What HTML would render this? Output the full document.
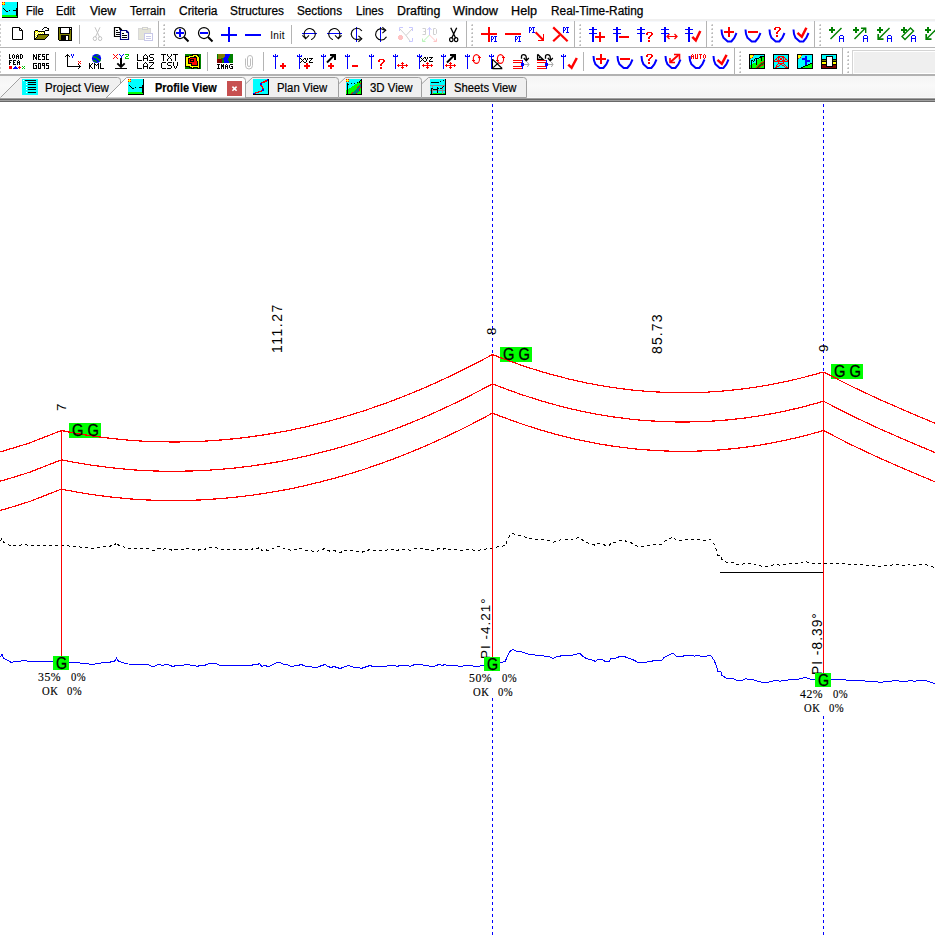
<!DOCTYPE html>
<html lang="en"><head><meta charset="utf-8"><title>PLS-CADD - Profile View</title>
<style>
html,body{margin:0;padding:0;background:#fff;}
body{width:935px;height:935px;overflow:hidden;position:relative;font-family:"Liberation Sans",sans-serif;font-size:12px;color:#000;}
.abs{position:absolute;}
.menubar{left:0;top:0;width:935px;height:19px;background:#fff;}
.menubar .mi{-webkit-text-stroke:0.25px #000;position:absolute;top:3px;height:16px;line-height:16px;white-space:nowrap;transform-origin:0 50%;}
.mshadow{left:0;top:19px;width:935px;height:2px;background:#f0f0f0;}
.mshadow2{left:0;top:21px;width:935px;height:1px;background:#f6f8fc;}
.tbrow1{left:0;top:22px;width:935px;height:25px;background:#fff;}
.tbline1{left:0;top:47px;width:935px;height:1px;background:#b4b4b4;}
.tbrow2{left:0;top:48px;width:935px;height:26px;background:#fff;}
.tbline2{left:0;top:74px;width:935px;height:2px;background:#b2b2b2;}
.tabrow{left:0;top:76px;width:935px;height:22px;background:linear-gradient(#f4f4f4,#f9f9f9 45%,#f3f3f3);}
.band{left:0;width:935px;height:1px;}
svg{position:absolute;left:0;top:0;overflow:visible;}
.px{shape-rendering:crispEdges;}
.tablabel{-webkit-text-stroke:0.2px #000;position:absolute;top:80px;height:16px;line-height:16px;white-space:nowrap;transform-origin:0 50%;}
.init{position:absolute;left:270.2px;top:30.2px;font-size:10px;line-height:12px;letter-spacing:0.35px;color:#000;}
.view{left:0;top:102px;width:935px;height:833px;background:#fff;}
.vt{position:absolute;white-space:nowrap;font-size:13.3px;line-height:1;letter-spacing:1px;transform-origin:0 0;transform:rotate(-90deg);}
.gl{-webkit-text-stroke:0.3px #000;position:absolute;font-size:16.5px;line-height:15px;height:15px;white-space:nowrap;}
.pct{-webkit-text-stroke:0.15px #000;position:absolute;font-family:"Liberation Serif",serif;font-size:12.5px;line-height:13px;white-space:pre;letter-spacing:0.6px;color:#000;}
</style></head><body>

<div class="abs menubar">
<span class="mi" style="left:25.6px;transform:scaleX(0.9099)">File</span>
<span class="mi" style="left:56.4px;transform:scaleX(0.9233)">Edit</span>
<span class="mi" style="left:90.2px;transform:scaleX(1.0079)">View</span>
<span class="mi" style="left:129.7px;transform:scaleX(0.9676)">Terrain</span>
<span class="mi" style="left:178.7px;transform:scaleX(0.9956)">Criteria</span>
<span class="mi" style="left:230.2px;transform:scaleX(0.9874)">Structures</span>
<span class="mi" style="left:297.2px;transform:scaleX(0.9776)">Sections</span>
<span class="mi" style="left:355.7px;transform:scaleX(0.9586)">Lines</span>
<span class="mi" style="left:396.8px;transform:scaleX(1.0326)">Drafting</span>
<span class="mi" style="left:453.2px;transform:scaleX(1.0542)">Window</span>
<span class="mi" style="left:511.2px;transform:scaleX(1.0532)">Help</span>
<span class="mi" style="left:550.9px;transform:scaleX(0.9862)">Real-Time-Rating</span>
</div>
<div class="abs mshadow"></div><div class="abs mshadow2"></div>
<div class="abs tbrow1"></div><div class="abs tbline1"></div>
<div class="abs tbrow2"></div><div class="abs tbline2"></div>
<div class="abs tabrow"></div>
<div class="abs band" style="top:97px;background:#f8f8f8"></div>
<div class="abs band" style="top:98px;background:#a0a0a0"></div>
<div class="abs band" style="top:99px;background:#696969"></div>
<div class="abs band" style="top:100px;background:#a0a0a0"></div>
<div class="abs band" style="top:101px;background:#696969"></div>
<div class="abs view"></div>
<svg class="px" width="935" height="22" viewBox="0 0 935 22"><rect x="2" y="2" width="1" height="1" fill="#ff0000"/><rect x="3" y="2" width="1" height="1" fill="#ffff00"/><rect x="4" y="2" width="1" height="1" fill="#ff0000"/><rect x="5" y="2" width="12" height="1" fill="#00ffff"/><rect x="17" y="2" width="1" height="1" fill="#000"/><rect x="2" y="3" width="3" height="1" fill="#ffff00"/><rect x="5" y="3" width="12" height="1" fill="#00ffff"/><rect x="17" y="3" width="1" height="1" fill="#000"/><rect x="2" y="4" width="1" height="1" fill="#ff0000"/><rect x="3" y="4" width="1" height="1" fill="#ffff00"/><rect x="4" y="4" width="1" height="1" fill="#ff0000"/><rect x="5" y="4" width="12" height="1" fill="#00ffff"/><rect x="17" y="4" width="1" height="1" fill="#000"/><rect x="2" y="5" width="15" height="1" fill="#00ffff"/><rect x="17" y="5" width="1" height="1" fill="#000"/><rect x="2" y="6" width="15" height="1" fill="#00ffff"/><rect x="17" y="6" width="1" height="1" fill="#000"/><rect x="2" y="7" width="15" height="1" fill="#00ffff"/><rect x="17" y="7" width="1" height="1" fill="#000"/><rect x="2" y="8" width="1" height="1" fill="#00ffff"/><rect x="3" y="8" width="1" height="1" fill="#000"/><rect x="4" y="8" width="12" height="1" fill="#00ffff"/><rect x="16" y="8" width="2" height="1" fill="#000"/><rect x="2" y="9" width="2" height="1" fill="#00ffff"/><rect x="4" y="9" width="1" height="1" fill="#000"/><rect x="5" y="9" width="11" height="1" fill="#00ffff"/><rect x="16" y="9" width="2" height="1" fill="#000"/><rect x="2" y="10" width="3" height="1" fill="#00ffff"/><rect x="5" y="10" width="1" height="1" fill="#000"/><rect x="6" y="10" width="3" height="1" fill="#00ffff"/><rect x="9" y="10" width="1" height="1" fill="#000"/><rect x="10" y="10" width="3" height="1" fill="#00ffff"/><rect x="13" y="10" width="5" height="1" fill="#000"/><rect x="2" y="11" width="4" height="1" fill="#00ffff"/><rect x="6" y="11" width="2" height="1" fill="#000"/><rect x="8" y="11" width="8" height="1" fill="#00ffff"/><rect x="16" y="11" width="2" height="1" fill="#000"/><rect x="2" y="12" width="14" height="1" fill="#00ffff"/><rect x="16" y="12" width="2" height="1" fill="#000"/><rect x="2" y="13" width="14" height="1" fill="#00ffff"/><rect x="16" y="13" width="2" height="1" fill="#000"/><rect x="2" y="14" width="14" height="1" fill="#00ffff"/><rect x="16" y="14" width="2" height="1" fill="#000"/><rect x="2" y="15" width="14" height="1" fill="#00ff00"/><rect x="16" y="15" width="2" height="1" fill="#000"/><rect x="2" y="16" width="15" height="1" fill="#00ff00"/><rect x="17" y="16" width="1" height="1" fill="#000"/><rect x="2" y="17" width="16" height="1" fill="#000"/></svg>
<svg class="px" width="935" height="48" viewBox="0 0 935 48"><g><rect x="0" y="24" width="1" height="2" fill="#cacaca"/><rect x="0" y="28" width="1" height="2" fill="#cacaca"/><rect x="0" y="32" width="1" height="2" fill="#cacaca"/><rect x="0" y="36" width="1" height="2" fill="#cacaca"/><rect x="0" y="40" width="1" height="2" fill="#cacaca"/><rect x="0" y="44" width="1" height="2" fill="#cacaca"/><path d="M12.5 27.5H19.5L22.5 30.5V39.5H12.5Z" stroke="#000" stroke-width="1" fill="#fff" shape-rendering="geometricPrecision"/><path d="M19.5 27.5V30.5H22.5" stroke="#000" stroke-width="1" fill="none" shape-rendering="geometricPrecision"/><rect x="44" y="27" width="3" height="1" fill="#000"/><rect x="43" y="28" width="1" height="1" fill="#000"/><rect x="47" y="28" width="2" height="1" fill="#000"/><rect x="42" y="29" width="1" height="1" fill="#000"/><rect x="48" y="29" width="1" height="1" fill="#000"/><rect x="35" y="30" width="3" height="1" fill="#000"/><rect x="45" y="30" width="4" height="1" fill="#000"/><rect x="34" y="31" width="1" height="1" fill="#000"/><rect x="35" y="31" width="3" height="1" fill="#ffff00"/><rect x="38" y="31" width="7" height="1" fill="#000"/><rect x="34" y="32" width="1" height="1" fill="#000"/><rect x="35" y="32" width="1" height="1" fill="#ffff00"/><rect x="36" y="32" width="1" height="1" fill="#ffffff"/><rect x="37" y="32" width="1" height="1" fill="#ffff00"/><rect x="38" y="32" width="1" height="1" fill="#ffffff"/><rect x="39" y="32" width="1" height="1" fill="#ffff00"/><rect x="40" y="32" width="1" height="1" fill="#ffffff"/><rect x="41" y="32" width="1" height="1" fill="#ffff00"/><rect x="42" y="32" width="1" height="1" fill="#ffffff"/><rect x="43" y="32" width="1" height="1" fill="#ffff00"/><rect x="44" y="32" width="1" height="1" fill="#000"/><rect x="34" y="33" width="1" height="1" fill="#000"/><rect x="35" y="33" width="1" height="1" fill="#ffffff"/><rect x="36" y="33" width="1" height="1" fill="#ffff00"/><rect x="37" y="33" width="1" height="1" fill="#ffffff"/><rect x="38" y="33" width="1" height="1" fill="#ffff00"/><rect x="39" y="33" width="1" height="1" fill="#ffffff"/><rect x="40" y="33" width="1" height="1" fill="#ffff00"/><rect x="41" y="33" width="1" height="1" fill="#ffffff"/><rect x="42" y="33" width="1" height="1" fill="#ffff00"/><rect x="43" y="33" width="1" height="1" fill="#ffffff"/><rect x="44" y="33" width="1" height="1" fill="#000"/><rect x="34" y="34" width="1" height="1" fill="#000"/><rect x="35" y="34" width="1" height="1" fill="#ffff00"/><rect x="36" y="34" width="1" height="1" fill="#ffffff"/><rect x="37" y="34" width="1" height="1" fill="#ffff00"/><rect x="38" y="34" width="11" height="1" fill="#000"/><rect x="34" y="35" width="1" height="1" fill="#000"/><rect x="35" y="35" width="1" height="1" fill="#ffffff"/><rect x="36" y="35" width="1" height="1" fill="#ffff00"/><rect x="37" y="35" width="1" height="1" fill="#000"/><rect x="38" y="35" width="10" height="1" fill="#808000"/><rect x="48" y="35" width="1" height="1" fill="#000"/><rect x="34" y="36" width="1" height="1" fill="#000"/><rect x="35" y="36" width="1" height="1" fill="#ffff00"/><rect x="36" y="36" width="1" height="1" fill="#ffffff"/><rect x="37" y="36" width="1" height="1" fill="#000"/><rect x="38" y="36" width="9" height="1" fill="#808000"/><rect x="47" y="36" width="1" height="1" fill="#000"/><rect x="34" y="37" width="1" height="1" fill="#000"/><rect x="35" y="37" width="1" height="1" fill="#ffffff"/><rect x="36" y="37" width="1" height="1" fill="#000"/><rect x="37" y="37" width="9" height="1" fill="#808000"/><rect x="46" y="37" width="1" height="1" fill="#000"/><rect x="34" y="38" width="2" height="1" fill="#000"/><rect x="36" y="38" width="9" height="1" fill="#808000"/><rect x="45" y="38" width="1" height="1" fill="#000"/><rect x="34" y="39" width="11" height="1" fill="#000"/><rect x="58" y="27" width="14" height="1" fill="#000"/><rect x="58" y="28" width="1" height="1" fill="#000"/><rect x="59" y="28" width="1" height="1" fill="#808000"/><rect x="60" y="28" width="1" height="1" fill="#000"/><rect x="61" y="28" width="8" height="1" fill="#ffffff"/><rect x="69" y="28" width="1" height="1" fill="#000"/><rect x="70" y="28" width="1" height="1" fill="#ffffff"/><rect x="71" y="28" width="1" height="1" fill="#000"/><rect x="58" y="29" width="1" height="1" fill="#000"/><rect x="59" y="29" width="1" height="1" fill="#808000"/><rect x="60" y="29" width="1" height="1" fill="#000"/><rect x="61" y="29" width="8" height="1" fill="#ffffff"/><rect x="69" y="29" width="3" height="1" fill="#000"/><rect x="58" y="30" width="1" height="1" fill="#000"/><rect x="59" y="30" width="1" height="1" fill="#808000"/><rect x="60" y="30" width="1" height="1" fill="#000"/><rect x="61" y="30" width="8" height="1" fill="#ffffff"/><rect x="69" y="30" width="1" height="1" fill="#000"/><rect x="70" y="30" width="1" height="1" fill="#808000"/><rect x="71" y="30" width="1" height="1" fill="#000"/><rect x="58" y="31" width="1" height="1" fill="#000"/><rect x="59" y="31" width="1" height="1" fill="#808000"/><rect x="60" y="31" width="1" height="1" fill="#000"/><rect x="61" y="31" width="8" height="1" fill="#ffffff"/><rect x="69" y="31" width="1" height="1" fill="#000"/><rect x="70" y="31" width="1" height="1" fill="#808000"/><rect x="71" y="31" width="1" height="1" fill="#000"/><rect x="58" y="32" width="1" height="1" fill="#000"/><rect x="59" y="32" width="1" height="1" fill="#808000"/><rect x="60" y="32" width="1" height="1" fill="#000"/><rect x="61" y="32" width="8" height="1" fill="#ffffff"/><rect x="69" y="32" width="1" height="1" fill="#000"/><rect x="70" y="32" width="1" height="1" fill="#808000"/><rect x="71" y="32" width="1" height="1" fill="#000"/><rect x="58" y="33" width="1" height="1" fill="#000"/><rect x="59" y="33" width="1" height="1" fill="#808000"/><rect x="60" y="33" width="10" height="1" fill="#000"/><rect x="70" y="33" width="1" height="1" fill="#808000"/><rect x="71" y="33" width="1" height="1" fill="#000"/><rect x="58" y="34" width="1" height="1" fill="#000"/><rect x="59" y="34" width="12" height="1" fill="#808000"/><rect x="71" y="34" width="1" height="1" fill="#000"/><rect x="58" y="35" width="1" height="1" fill="#000"/><rect x="59" y="35" width="2" height="1" fill="#808000"/><rect x="61" y="35" width="8" height="1" fill="#000"/><rect x="69" y="35" width="2" height="1" fill="#808000"/><rect x="71" y="35" width="1" height="1" fill="#000"/><rect x="58" y="36" width="1" height="1" fill="#000"/><rect x="59" y="36" width="2" height="1" fill="#808000"/><rect x="61" y="36" width="5" height="1" fill="#000"/><rect x="66" y="36" width="2" height="1" fill="#ffffff"/><rect x="68" y="36" width="1" height="1" fill="#000"/><rect x="69" y="36" width="2" height="1" fill="#808000"/><rect x="71" y="36" width="1" height="1" fill="#000"/><rect x="58" y="37" width="1" height="1" fill="#000"/><rect x="59" y="37" width="2" height="1" fill="#808000"/><rect x="61" y="37" width="5" height="1" fill="#000"/><rect x="66" y="37" width="2" height="1" fill="#ffffff"/><rect x="68" y="37" width="1" height="1" fill="#000"/><rect x="69" y="37" width="2" height="1" fill="#808000"/><rect x="71" y="37" width="1" height="1" fill="#000"/><rect x="58" y="38" width="1" height="1" fill="#000"/><rect x="59" y="38" width="2" height="1" fill="#808000"/><rect x="61" y="38" width="5" height="1" fill="#000"/><rect x="66" y="38" width="2" height="1" fill="#ffffff"/><rect x="68" y="38" width="1" height="1" fill="#000"/><rect x="69" y="38" width="2" height="1" fill="#808000"/><rect x="71" y="38" width="1" height="1" fill="#000"/><rect x="58" y="39" width="1" height="1" fill="#000"/><rect x="59" y="39" width="2" height="1" fill="#808000"/><rect x="61" y="39" width="5" height="1" fill="#000"/><rect x="66" y="39" width="2" height="1" fill="#ffffff"/><rect x="68" y="39" width="1" height="1" fill="#000"/><rect x="69" y="39" width="2" height="1" fill="#808000"/><rect x="71" y="39" width="1" height="1" fill="#000"/><rect x="59" y="40" width="13" height="1" fill="#000"/><rect x="79" y="25" width="1" height="19" fill="#b4b4b4"/><path d="M95 27.3L99.6 37.2M100 27.3L95.4 37.2" stroke="#c4c4c4" stroke-width="1" fill="none" shape-rendering="geometricPrecision"/><ellipse cx="94.9" cy="38.6" rx="1.7" ry="2" stroke="#c4c4c4" fill="none" shape-rendering="geometricPrecision"/><ellipse cx="100.1" cy="38.6" rx="1.7" ry="2" stroke="#c4c4c4" fill="none" shape-rendering="geometricPrecision"/><path d="M114.5 27.5H119.5L121.5 29.5V36.5H114.5Z" stroke="#000" stroke-width="1.2" fill="#fff" shape-rendering="geometricPrecision"/><path d="M119.5 27.5V29.5H121.5" stroke="#000" stroke-width="1" fill="none" shape-rendering="geometricPrecision"/><rect x="116" y="30" width="2" height="1" fill="#000"/><rect x="116" y="32" width="4" height="1" fill="#000"/><rect x="116" y="34" width="4" height="1" fill="#000"/><path d="M120.5 30.5H126.5L128.5 32.5V39.5H120.5Z" stroke="#000080" stroke-width="1.2" fill="#fff" shape-rendering="geometricPrecision"/><path d="M126.5 30.5V32.5H128.5" stroke="#000080" stroke-width="1" fill="none" shape-rendering="geometricPrecision"/><rect x="122" y="33" width="2" height="1" fill="#000"/><rect x="122" y="35" width="5" height="1" fill="#000"/><rect x="122" y="37" width="5" height="1" fill="#000"/><rect x="138.5" y="28.5" width="12" height="11" fill="#e4e4d8" stroke="#d8d8d8"/><rect x="142.5" y="27.5" width="5" height="2" fill="#f4f4e0" stroke="#d0d0d0"/><rect x="144.5" y="33.5" width="8" height="7" fill="#fff" stroke="#c8c8e8"/><rect x="146" y="36" width="5" height="1" fill="#c8c8e8"/><rect x="146" y="38" width="5" height="1" fill="#c8c8e8"/><rect x="158" y="21" width="1" height="26" fill="#b4b4b4"/><rect x="163" y="24" width="2" height="2" fill="#cacaca"/><rect x="163" y="24" width="1" height="1" fill="#ececec"/><rect x="164" y="25" width="1" height="1" fill="#b8b8b8"/><rect x="163" y="28" width="2" height="2" fill="#cacaca"/><rect x="163" y="28" width="1" height="1" fill="#ececec"/><rect x="164" y="29" width="1" height="1" fill="#b8b8b8"/><rect x="163" y="32" width="2" height="2" fill="#cacaca"/><rect x="163" y="32" width="1" height="1" fill="#ececec"/><rect x="164" y="33" width="1" height="1" fill="#b8b8b8"/><rect x="163" y="36" width="2" height="2" fill="#cacaca"/><rect x="163" y="36" width="1" height="1" fill="#ececec"/><rect x="164" y="37" width="1" height="1" fill="#b8b8b8"/><rect x="163" y="40" width="2" height="2" fill="#cacaca"/><rect x="163" y="40" width="1" height="1" fill="#ececec"/><rect x="164" y="41" width="1" height="1" fill="#b8b8b8"/><rect x="163" y="44" width="2" height="2" fill="#cacaca"/><rect x="163" y="44" width="1" height="1" fill="#ececec"/><rect x="164" y="45" width="1" height="1" fill="#b8b8b8"/><circle cx="180" cy="33" r="5.5" stroke="#000" stroke-width="1.25" fill="none" shape-rendering="geometricPrecision"/><line x1="184" y1="37" x2="188.5" y2="41.5" stroke="#000" stroke-width="2" shape-rendering="geometricPrecision"/><rect x="176" y="32" width="8" height="2" fill="#0000ff"/><rect x="179" y="29" width="2" height="8" fill="#0000ff"/><circle cx="204" cy="33" r="5.5" stroke="#000" stroke-width="1.25" fill="none" shape-rendering="geometricPrecision"/><line x1="208" y1="37" x2="212.5" y2="41.5" stroke="#000" stroke-width="2" shape-rendering="geometricPrecision"/><rect x="200" y="32" width="8" height="2" fill="#0000ff"/><rect x="221" y="34" width="16" height="2" fill="#0000ff"/><rect x="228" y="27" width="2" height="15" fill="#0000ff"/><rect x="245" y="34" width="16" height="2" fill="#0000ff"/><rect x="291" y="25" width="1" height="19" fill="#b4b4b4"/><rect x="302" y="33" width="15" height="1" fill="#0000ff"/><path d="M305.6 38A5.6 5.6 0 1 1 311.6 39.4" stroke="#000" stroke-width="1.1" fill="none" shape-rendering="geometricPrecision" stroke-linecap="square"/><path d="M302.8 35.8L305.6 38.8L308.6 35.8" stroke="#000" stroke-width="1.1" fill="none" shape-rendering="geometricPrecision" stroke-linecap="square"/><rect x="327" y="33" width="15" height="1" fill="#0000ff"/><path d="M338.4 38A5.6 5.6 0 1 0 332.4 39.4" stroke="#000" stroke-width="1.1" fill="none" shape-rendering="geometricPrecision" stroke-linecap="square"/><path d="M341.2 35.8L338.4 38.8L335.4 35.8" stroke="#000" stroke-width="1.1" fill="none" shape-rendering="geometricPrecision" stroke-linecap="square"/><rect x="356" y="27" width="1" height="15" fill="#0000ff"/><path d="M361.6 30.6A5.7 5.7 0 1 0 356.5 39.6L361 38.8" stroke="#000" stroke-width="1.1" fill="none" shape-rendering="geometricPrecision" stroke-linecap="square"/><path d="M358.8 36.2L361.8 38.8L358.8 41.4" stroke="#000" stroke-width="1.1" fill="none" shape-rendering="geometricPrecision" stroke-linecap="square"/><rect x="380" y="27" width="1" height="15" fill="#0000ff"/><path d="M386.2 37.2A5.7 5.7 0 1 1 380.5 28.6L385 30.2" stroke="#000" stroke-width="1.1" fill="none" shape-rendering="geometricPrecision" stroke-linecap="square"/><path d="M382.8 27.6L385.8 30.2L382.8 32.8" stroke="#000" stroke-width="1.1" fill="none" shape-rendering="geometricPrecision" stroke-linecap="square"/><path d="M400 29L406 35.5L412 29M406 35.5L410 41" stroke="#d0d0d0" stroke-width="1" fill="none" shape-rendering="geometricPrecision"/><path d="M399.5 31V27.5H403M409 27.5H412.5V31M412.5 38V41.5H409" stroke="#c8c8ff" stroke-width="1" fill="none" shape-rendering="geometricPrecision"/><circle cx="400.5" cy="37.5" r="2.5" fill="#ffc4c4"/><path d="M422.5 28.5H425.5V34.5H422.5M423.5 31.5H425.5" stroke="#d0d0d0" stroke-width="1" fill="none" shape-rendering="geometricPrecision"/><path d="M433.5 28.5V34.5H435.5L436.5 33.5V29.5L435.5 28.5Z" stroke="#d0d0d0" stroke-width="1" fill="none" shape-rendering="geometricPrecision"/><path d="M429.5 35V27.5M427.5 30L429.5 27.5L431.5 30" stroke="#c8c8ff" stroke-width="1" fill="none" shape-rendering="geometricPrecision"/><path d="M429.5 35L423 41.5M422.5 38.5V41.5H425.5" stroke="#b8f4b8" stroke-width="1" fill="none" shape-rendering="geometricPrecision"/><path d="M429.5 35L436 41.5M436.5 38.5V41.5H433.5" stroke="#ffc4c4" stroke-width="1" fill="none" shape-rendering="geometricPrecision"/><path d="M451 28.4L455.6 38M456.4 28.4L451.8 38" stroke="#000" stroke-width="1.3" fill="none" shape-rendering="geometricPrecision" stroke-linecap="square"/><ellipse cx="451.3" cy="39.6" rx="1.7" ry="2.1" stroke="#000" stroke-width="1.2" fill="none" shape-rendering="geometricPrecision" stroke-linecap="square"/><ellipse cx="456.1" cy="39.6" rx="1.7" ry="2.1" stroke="#000" stroke-width="1.2" fill="none" shape-rendering="geometricPrecision" stroke-linecap="square"/><rect x="466" y="21" width="1" height="26" fill="#b4b4b4"/><rect x="471" y="24" width="2" height="2" fill="#cacaca"/><rect x="471" y="24" width="1" height="1" fill="#ececec"/><rect x="472" y="25" width="1" height="1" fill="#b8b8b8"/><rect x="471" y="28" width="2" height="2" fill="#cacaca"/><rect x="471" y="28" width="1" height="1" fill="#ececec"/><rect x="472" y="29" width="1" height="1" fill="#b8b8b8"/><rect x="471" y="32" width="2" height="2" fill="#cacaca"/><rect x="471" y="32" width="1" height="1" fill="#ececec"/><rect x="472" y="33" width="1" height="1" fill="#b8b8b8"/><rect x="471" y="36" width="2" height="2" fill="#cacaca"/><rect x="471" y="36" width="1" height="1" fill="#ececec"/><rect x="472" y="37" width="1" height="1" fill="#b8b8b8"/><rect x="471" y="40" width="2" height="2" fill="#cacaca"/><rect x="471" y="40" width="1" height="1" fill="#ececec"/><rect x="472" y="41" width="1" height="1" fill="#b8b8b8"/><rect x="471" y="44" width="2" height="2" fill="#cacaca"/><rect x="471" y="44" width="1" height="1" fill="#ececec"/><rect x="472" y="45" width="1" height="1" fill="#b8b8b8"/><rect x="481" y="33" width="16" height="2" fill="#ff0000"/><rect x="488" y="27" width="2" height="15" fill="#ff0000"/><rect x="491" y="36" width="2" height="1" fill="#0000ff"/><rect x="491" y="37" width="1" height="1" fill="#0000ff"/><rect x="493" y="37" width="1" height="1" fill="#0000ff"/><rect x="491" y="38" width="1" height="1" fill="#0000ff"/><rect x="493" y="38" width="1" height="1" fill="#0000ff"/><rect x="491" y="39" width="2" height="1" fill="#0000ff"/><rect x="491" y="40" width="1" height="1" fill="#0000ff"/><rect x="491" y="41" width="1" height="1" fill="#0000ff"/><rect x="494" y="36" width="3" height="1" fill="#0000ff"/><rect x="495" y="37" width="1" height="1" fill="#0000ff"/><rect x="495" y="38" width="1" height="1" fill="#0000ff"/><rect x="495" y="39" width="1" height="1" fill="#0000ff"/><rect x="495" y="40" width="1" height="1" fill="#0000ff"/><rect x="494" y="41" width="3" height="1" fill="#0000ff"/><rect x="505" y="33" width="16" height="2" fill="#ff0000"/><rect x="515" y="36" width="2" height="1" fill="#0000ff"/><rect x="515" y="37" width="1" height="1" fill="#0000ff"/><rect x="517" y="37" width="1" height="1" fill="#0000ff"/><rect x="515" y="38" width="1" height="1" fill="#0000ff"/><rect x="517" y="38" width="1" height="1" fill="#0000ff"/><rect x="515" y="39" width="2" height="1" fill="#0000ff"/><rect x="515" y="40" width="1" height="1" fill="#0000ff"/><rect x="515" y="41" width="1" height="1" fill="#0000ff"/><rect x="518" y="36" width="3" height="1" fill="#0000ff"/><rect x="519" y="37" width="1" height="1" fill="#0000ff"/><rect x="519" y="38" width="1" height="1" fill="#0000ff"/><rect x="519" y="39" width="1" height="1" fill="#0000ff"/><rect x="519" y="40" width="1" height="1" fill="#0000ff"/><rect x="518" y="41" width="3" height="1" fill="#0000ff"/><rect x="529" y="27" width="2" height="1" fill="#0000ff"/><rect x="529" y="28" width="1" height="1" fill="#0000ff"/><rect x="531" y="28" width="1" height="1" fill="#0000ff"/><rect x="529" y="29" width="1" height="1" fill="#0000ff"/><rect x="531" y="29" width="1" height="1" fill="#0000ff"/><rect x="529" y="30" width="2" height="1" fill="#0000ff"/><rect x="529" y="31" width="1" height="1" fill="#0000ff"/><rect x="529" y="32" width="1" height="1" fill="#0000ff"/><rect x="532" y="27" width="3" height="1" fill="#0000ff"/><rect x="533" y="28" width="1" height="1" fill="#0000ff"/><rect x="533" y="29" width="1" height="1" fill="#0000ff"/><rect x="533" y="30" width="1" height="1" fill="#0000ff"/><rect x="533" y="31" width="1" height="1" fill="#0000ff"/><rect x="532" y="32" width="3" height="1" fill="#0000ff"/><line x1="535.6" y1="32.2" x2="543.2" y2="40" stroke="#ff0000" stroke-width="2.1" shape-rendering="geometricPrecision"/><rect x="538" y="40" width="6" height="1" fill="#ff0000"/><rect x="543" y="34" width="1" height="7" fill="#ff0000"/><line x1="553.2" y1="27.4" x2="567.6" y2="41.2" stroke="#ff0000" stroke-width="2.2" shape-rendering="geometricPrecision"/><line x1="553.2" y1="41.2" x2="559.8" y2="35" stroke="#ff0000" stroke-width="2.2" shape-rendering="geometricPrecision"/><rect x="563" y="27" width="2" height="1" fill="#0000ff"/><rect x="563" y="28" width="1" height="1" fill="#0000ff"/><rect x="565" y="28" width="1" height="1" fill="#0000ff"/><rect x="563" y="29" width="1" height="1" fill="#0000ff"/><rect x="565" y="29" width="1" height="1" fill="#0000ff"/><rect x="563" y="30" width="2" height="1" fill="#0000ff"/><rect x="563" y="31" width="1" height="1" fill="#0000ff"/><rect x="563" y="32" width="1" height="1" fill="#0000ff"/><rect x="566" y="27" width="3" height="1" fill="#0000ff"/><rect x="567" y="28" width="1" height="1" fill="#0000ff"/><rect x="567" y="29" width="1" height="1" fill="#0000ff"/><rect x="567" y="30" width="1" height="1" fill="#0000ff"/><rect x="567" y="31" width="1" height="1" fill="#0000ff"/><rect x="566" y="32" width="3" height="1" fill="#0000ff"/><rect x="574" y="21" width="1" height="26" fill="#b4b4b4"/><rect x="579" y="24" width="2" height="2" fill="#cacaca"/><rect x="579" y="24" width="1" height="1" fill="#ececec"/><rect x="580" y="25" width="1" height="1" fill="#b8b8b8"/><rect x="579" y="28" width="2" height="2" fill="#cacaca"/><rect x="579" y="28" width="1" height="1" fill="#ececec"/><rect x="580" y="29" width="1" height="1" fill="#b8b8b8"/><rect x="579" y="32" width="2" height="2" fill="#cacaca"/><rect x="579" y="32" width="1" height="1" fill="#ececec"/><rect x="580" y="33" width="1" height="1" fill="#b8b8b8"/><rect x="579" y="36" width="2" height="2" fill="#cacaca"/><rect x="579" y="36" width="1" height="1" fill="#ececec"/><rect x="580" y="37" width="1" height="1" fill="#b8b8b8"/><rect x="579" y="40" width="2" height="2" fill="#cacaca"/><rect x="579" y="40" width="1" height="1" fill="#ececec"/><rect x="580" y="41" width="1" height="1" fill="#b8b8b8"/><rect x="579" y="44" width="2" height="2" fill="#cacaca"/><rect x="579" y="44" width="1" height="1" fill="#ececec"/><rect x="580" y="45" width="1" height="1" fill="#b8b8b8"/><rect x="592" y="27" width="2" height="15" fill="#0000ff"/><rect x="589" y="29" width="8" height="1" fill="#0000ff"/><rect x="589" y="33" width="8" height="1" fill="#0000ff"/><rect x="595" y="36" width="10" height="2" fill="#ff0000"/><rect x="599" y="32" width="2" height="10" fill="#ff0000"/><rect x="616" y="27" width="2" height="15" fill="#0000ff"/><rect x="613" y="29" width="8" height="1" fill="#0000ff"/><rect x="613" y="33" width="8" height="1" fill="#0000ff"/><rect x="619" y="36" width="10" height="2" fill="#ff0000"/><rect x="640" y="27" width="2" height="15" fill="#0000ff"/><rect x="637" y="29" width="8" height="1" fill="#0000ff"/><rect x="637" y="33" width="8" height="1" fill="#0000ff"/><rect x="647" y="32" width="5" height="1" fill="#ff0000"/><rect x="646" y="33" width="2" height="1" fill="#ff0000"/><rect x="651" y="33" width="2" height="1" fill="#ff0000"/><rect x="646" y="34" width="2" height="1" fill="#ff0000"/><rect x="651" y="34" width="2" height="1" fill="#ff0000"/><rect x="650" y="35" width="2" height="1" fill="#ff0000"/><rect x="649" y="36" width="2" height="1" fill="#ff0000"/><rect x="648" y="37" width="2" height="1" fill="#ff0000"/><rect x="648" y="38" width="2" height="1" fill="#ff0000"/><rect x="648" y="40" width="2" height="1" fill="#ff0000"/><rect x="648" y="41" width="2" height="1" fill="#ff0000"/><rect x="664" y="27" width="2" height="15" fill="#0000ff"/><rect x="661" y="29" width="8" height="1" fill="#0000ff"/><rect x="661" y="33" width="8" height="1" fill="#0000ff"/><rect x="667" y="36" width="10" height="1" fill="#ff0000"/><path d="M669.5 34L667 36.5L669.5 39M674.5 34L677 36.5L674.5 39" stroke="#ff0000" stroke-width="1.3" fill="none" shape-rendering="geometricPrecision"/><rect x="688" y="27" width="2" height="15" fill="#0000ff"/><rect x="685" y="29" width="8" height="1" fill="#0000ff"/><rect x="685" y="33" width="8" height="1" fill="#0000ff"/><path d="M692.3 36.8L695.8 40.3L700.3 31" stroke="#ff0000" stroke-width="2.5" fill="none" shape-rendering="geometricPrecision"/><rect x="706" y="21" width="1" height="26" fill="#b4b4b4"/><rect x="711" y="24" width="2" height="2" fill="#cacaca"/><rect x="711" y="24" width="1" height="1" fill="#ececec"/><rect x="712" y="25" width="1" height="1" fill="#b8b8b8"/><rect x="711" y="28" width="2" height="2" fill="#cacaca"/><rect x="711" y="28" width="1" height="1" fill="#ececec"/><rect x="712" y="29" width="1" height="1" fill="#b8b8b8"/><rect x="711" y="32" width="2" height="2" fill="#cacaca"/><rect x="711" y="32" width="1" height="1" fill="#ececec"/><rect x="712" y="33" width="1" height="1" fill="#b8b8b8"/><rect x="711" y="36" width="2" height="2" fill="#cacaca"/><rect x="711" y="36" width="1" height="1" fill="#ececec"/><rect x="712" y="37" width="1" height="1" fill="#b8b8b8"/><rect x="711" y="40" width="2" height="2" fill="#cacaca"/><rect x="711" y="40" width="1" height="1" fill="#ececec"/><rect x="712" y="41" width="1" height="1" fill="#b8b8b8"/><rect x="711" y="44" width="2" height="2" fill="#cacaca"/><rect x="711" y="44" width="1" height="1" fill="#ececec"/><rect x="712" y="45" width="1" height="1" fill="#b8b8b8"/><path d="M721.5 29.5L722 34.0L723.5 37.8L727.7 41.5H731.3L734.3 37.8L736.5 33.0" stroke="#0000ff" stroke-width="2" fill="none" shape-rendering="geometricPrecision" stroke-linejoin="round"/><rect x="724" y="31" width="10" height="2" fill="#ff0000"/><rect x="728" y="27" width="2" height="10" fill="#ff0000"/><path d="M745.5 29.5L746 34.0L747.5 37.8L751.7 41.5H755.3L758.3 37.8L760.5 33.0" stroke="#0000ff" stroke-width="2" fill="none" shape-rendering="geometricPrecision" stroke-linejoin="round"/><rect x="748" y="31" width="10" height="2" fill="#ff0000"/><path d="M769.5 29.5L770 34.0L771.5 37.8L775.7 41.5H779.3L782.3 37.8L784.5 33.0" stroke="#0000ff" stroke-width="2" fill="none" shape-rendering="geometricPrecision" stroke-linejoin="round"/><rect x="775" y="34" width="5" height="5" fill="#fff"/><rect x="775" y="27" width="5" height="1" fill="#ff0000"/><rect x="774" y="28" width="2" height="1" fill="#ff0000"/><rect x="779" y="28" width="2" height="1" fill="#ff0000"/><rect x="774" y="29" width="2" height="1" fill="#ff0000"/><rect x="779" y="29" width="2" height="1" fill="#ff0000"/><rect x="778" y="30" width="2" height="1" fill="#ff0000"/><rect x="777" y="31" width="2" height="1" fill="#ff0000"/><rect x="776" y="32" width="2" height="1" fill="#ff0000"/><rect x="776" y="33" width="2" height="1" fill="#ff0000"/><rect x="776" y="35" width="2" height="1" fill="#ff0000"/><rect x="776" y="36" width="2" height="1" fill="#ff0000"/><path d="M793.5 29.5L794 34.0L795.5 37.8L799.7 41.5H803.3L806.3 37.8L808.5 33.0" stroke="#0000ff" stroke-width="2" fill="none" shape-rendering="geometricPrecision" stroke-linejoin="round"/><path d="M797.5 32.8L801.8 36.8L806.4 27.8" stroke="#fff" stroke-width="4.6" fill="none" shape-rendering="geometricPrecision"/><path d="M797.5 32.8L801.8 36.8L806.4 27.8" stroke="#ff0000" stroke-width="2.5" fill="none" shape-rendering="geometricPrecision"/><rect x="814" y="21" width="1" height="26" fill="#b4b4b4"/><rect x="819" y="24" width="2" height="2" fill="#cacaca"/><rect x="819" y="24" width="1" height="1" fill="#ececec"/><rect x="820" y="25" width="1" height="1" fill="#b8b8b8"/><rect x="819" y="28" width="2" height="2" fill="#cacaca"/><rect x="819" y="28" width="1" height="1" fill="#ececec"/><rect x="820" y="29" width="1" height="1" fill="#b8b8b8"/><rect x="819" y="32" width="2" height="2" fill="#cacaca"/><rect x="819" y="32" width="1" height="1" fill="#ececec"/><rect x="820" y="33" width="1" height="1" fill="#b8b8b8"/><rect x="819" y="36" width="2" height="2" fill="#cacaca"/><rect x="819" y="36" width="1" height="1" fill="#ececec"/><rect x="820" y="37" width="1" height="1" fill="#b8b8b8"/><rect x="819" y="40" width="2" height="2" fill="#cacaca"/><rect x="819" y="40" width="1" height="1" fill="#ececec"/><rect x="820" y="41" width="1" height="1" fill="#b8b8b8"/><rect x="819" y="44" width="2" height="2" fill="#cacaca"/><rect x="819" y="44" width="1" height="1" fill="#ececec"/><rect x="820" y="45" width="1" height="1" fill="#b8b8b8"/><rect x="829" y="29" width="6" height="2" fill="#008000"/><rect x="831" y="27" width="2" height="6" fill="#008000"/><rect x="840" y="35" width="3" height="1" fill="#0000ff"/><rect x="839" y="36" width="1" height="1" fill="#0000ff"/><rect x="843" y="36" width="1" height="1" fill="#0000ff"/><rect x="839" y="37" width="1" height="1" fill="#0000ff"/><rect x="843" y="37" width="1" height="1" fill="#0000ff"/><rect x="839" y="38" width="5" height="1" fill="#0000ff"/><rect x="839" y="39" width="1" height="1" fill="#0000ff"/><rect x="843" y="39" width="1" height="1" fill="#0000ff"/><rect x="839" y="40" width="1" height="1" fill="#0000ff"/><rect x="843" y="40" width="1" height="1" fill="#0000ff"/><rect x="839" y="41" width="1" height="1" fill="#0000ff"/><rect x="843" y="41" width="1" height="1" fill="#0000ff"/><line x1="830.5" y1="39" x2="841.5" y2="28" stroke="#008000" stroke-width="1.5" shape-rendering="geometricPrecision"/><rect x="853" y="29" width="6" height="2" fill="#008000"/><rect x="855" y="27" width="2" height="6" fill="#008000"/><rect x="864" y="35" width="3" height="1" fill="#0000ff"/><rect x="863" y="36" width="1" height="1" fill="#0000ff"/><rect x="867" y="36" width="1" height="1" fill="#0000ff"/><rect x="863" y="37" width="1" height="1" fill="#0000ff"/><rect x="867" y="37" width="1" height="1" fill="#0000ff"/><rect x="863" y="38" width="5" height="1" fill="#0000ff"/><rect x="863" y="39" width="1" height="1" fill="#0000ff"/><rect x="867" y="39" width="1" height="1" fill="#0000ff"/><rect x="863" y="40" width="1" height="1" fill="#0000ff"/><rect x="867" y="40" width="1" height="1" fill="#0000ff"/><rect x="863" y="41" width="1" height="1" fill="#0000ff"/><rect x="867" y="41" width="1" height="1" fill="#0000ff"/><line x1="854.5" y1="39" x2="865.5" y2="28" stroke="#008000" stroke-width="1.5" shape-rendering="geometricPrecision"/><path d="M861 28.3H865.7V33" stroke="#008000" stroke-width="1.4" fill="none" shape-rendering="geometricPrecision"/><rect x="877" y="29" width="6" height="2" fill="#008000"/><rect x="879" y="27" width="2" height="6" fill="#008000"/><rect x="888" y="35" width="3" height="1" fill="#0000ff"/><rect x="887" y="36" width="1" height="1" fill="#0000ff"/><rect x="891" y="36" width="1" height="1" fill="#0000ff"/><rect x="887" y="37" width="1" height="1" fill="#0000ff"/><rect x="891" y="37" width="1" height="1" fill="#0000ff"/><rect x="887" y="38" width="5" height="1" fill="#0000ff"/><rect x="887" y="39" width="1" height="1" fill="#0000ff"/><rect x="891" y="39" width="1" height="1" fill="#0000ff"/><rect x="887" y="40" width="1" height="1" fill="#0000ff"/><rect x="891" y="40" width="1" height="1" fill="#0000ff"/><rect x="887" y="41" width="1" height="1" fill="#0000ff"/><rect x="891" y="41" width="1" height="1" fill="#0000ff"/><line x1="878.5" y1="39" x2="889.5" y2="28" stroke="#008000" stroke-width="1.5" shape-rendering="geometricPrecision"/><path d="M878.2 34V39.2H883.5" stroke="#008000" stroke-width="1.7" fill="none" shape-rendering="geometricPrecision"/><rect x="901" y="29" width="6" height="2" fill="#008000"/><rect x="903" y="27" width="2" height="6" fill="#008000"/><rect x="912" y="35" width="3" height="1" fill="#0000ff"/><rect x="911" y="36" width="1" height="1" fill="#0000ff"/><rect x="915" y="36" width="1" height="1" fill="#0000ff"/><rect x="911" y="37" width="1" height="1" fill="#0000ff"/><rect x="915" y="37" width="1" height="1" fill="#0000ff"/><rect x="911" y="38" width="5" height="1" fill="#0000ff"/><rect x="911" y="39" width="1" height="1" fill="#0000ff"/><rect x="915" y="39" width="1" height="1" fill="#0000ff"/><rect x="911" y="40" width="1" height="1" fill="#0000ff"/><rect x="915" y="40" width="1" height="1" fill="#0000ff"/><rect x="911" y="41" width="1" height="1" fill="#0000ff"/><rect x="915" y="41" width="1" height="1" fill="#0000ff"/><path d="M902 36.5L910.5 28L913.5 31L905 39.5Z" stroke="#008000" stroke-width="1.4" fill="none" shape-rendering="geometricPrecision"/><rect x="925" y="29" width="6" height="2" fill="#008000"/><rect x="927" y="27" width="2" height="6" fill="#008000"/><rect x="936" y="35" width="3" height="1" fill="#0000ff"/><rect x="935" y="36" width="1" height="1" fill="#0000ff"/><rect x="939" y="36" width="1" height="1" fill="#0000ff"/><rect x="935" y="37" width="1" height="1" fill="#0000ff"/><rect x="939" y="37" width="1" height="1" fill="#0000ff"/><rect x="935" y="38" width="5" height="1" fill="#0000ff"/><rect x="935" y="39" width="1" height="1" fill="#0000ff"/><rect x="939" y="39" width="1" height="1" fill="#0000ff"/><rect x="935" y="40" width="1" height="1" fill="#0000ff"/><rect x="939" y="40" width="1" height="1" fill="#0000ff"/><rect x="935" y="41" width="1" height="1" fill="#0000ff"/><rect x="939" y="41" width="1" height="1" fill="#0000ff"/><line x1="926.5" y1="39" x2="937.5" y2="28" stroke="#008000" stroke-width="1.5" shape-rendering="geometricPrecision"/><path d="M926.2 34V39.2H931.5" stroke="#008000" stroke-width="1.7" fill="none" shape-rendering="geometricPrecision"/></g></svg>
<span class="init">Init</span>
<svg class="px" width="935" height="76" viewBox="0 0 935 76"><g><rect x="0" y="51" width="1" height="2" fill="#cacaca"/><rect x="0" y="55" width="1" height="2" fill="#cacaca"/><rect x="0" y="59" width="1" height="2" fill="#cacaca"/><rect x="0" y="63" width="1" height="2" fill="#cacaca"/><rect x="0" y="67" width="1" height="2" fill="#cacaca"/><rect x="0" y="71" width="1" height="2" fill="#cacaca"/><rect x="9" y="54" width="1" height="1" fill="#000"/><rect x="9" y="55" width="1" height="1" fill="#000"/><rect x="9" y="56" width="1" height="1" fill="#000"/><rect x="9" y="57" width="1" height="1" fill="#000"/><rect x="9" y="58" width="2" height="1" fill="#000"/><rect x="13" y="54" width="1" height="1" fill="#000"/><rect x="12" y="55" width="1" height="1" fill="#000"/><rect x="14" y="55" width="1" height="1" fill="#000"/><rect x="12" y="56" width="1" height="1" fill="#000"/><rect x="14" y="56" width="1" height="1" fill="#000"/><rect x="12" y="57" width="1" height="1" fill="#000"/><rect x="14" y="57" width="1" height="1" fill="#000"/><rect x="13" y="58" width="1" height="1" fill="#000"/><rect x="17" y="54" width="1" height="1" fill="#000"/><rect x="16" y="55" width="1" height="1" fill="#000"/><rect x="18" y="55" width="1" height="1" fill="#000"/><rect x="16" y="56" width="3" height="1" fill="#000"/><rect x="16" y="57" width="1" height="1" fill="#000"/><rect x="18" y="57" width="1" height="1" fill="#000"/><rect x="16" y="58" width="1" height="1" fill="#000"/><rect x="18" y="58" width="1" height="1" fill="#000"/><rect x="20" y="54" width="2" height="1" fill="#000"/><rect x="20" y="55" width="1" height="1" fill="#000"/><rect x="22" y="55" width="1" height="1" fill="#000"/><rect x="20" y="56" width="1" height="1" fill="#000"/><rect x="22" y="56" width="1" height="1" fill="#000"/><rect x="20" y="57" width="1" height="1" fill="#000"/><rect x="22" y="57" width="1" height="1" fill="#000"/><rect x="20" y="58" width="2" height="1" fill="#000"/><rect x="9" y="60" width="3" height="1" fill="#000"/><rect x="9" y="61" width="1" height="1" fill="#000"/><rect x="9" y="62" width="2" height="1" fill="#000"/><rect x="9" y="63" width="1" height="1" fill="#000"/><rect x="9" y="64" width="1" height="1" fill="#000"/><rect x="13" y="60" width="3" height="1" fill="#000"/><rect x="13" y="61" width="1" height="1" fill="#000"/><rect x="13" y="62" width="2" height="1" fill="#000"/><rect x="13" y="63" width="1" height="1" fill="#000"/><rect x="13" y="64" width="3" height="1" fill="#000"/><rect x="18" y="60" width="1" height="1" fill="#000"/><rect x="17" y="61" width="1" height="1" fill="#000"/><rect x="19" y="61" width="1" height="1" fill="#000"/><rect x="17" y="62" width="3" height="1" fill="#000"/><rect x="17" y="63" width="1" height="1" fill="#000"/><rect x="19" y="63" width="1" height="1" fill="#000"/><rect x="17" y="64" width="1" height="1" fill="#000"/><rect x="19" y="64" width="1" height="1" fill="#000"/><rect x="9" y="66" width="3" height="3" fill="#ff0000"/><rect x="15" y="66" width="1" height="1" fill="#0000ff"/><rect x="14" y="67" width="3" height="1" fill="#0000ff"/><rect x="13" y="68" width="5" height="1" fill="#0000ff"/><rect x="19" y="66" width="1" height="1" fill="#ff0000"/><rect x="18" y="67" width="3" height="1" fill="#ff0000"/><rect x="19" y="68" width="1" height="1" fill="#ff0000"/><rect x="22" y="66" width="1" height="1" fill="#00c000"/><rect x="24" y="66" width="1" height="1" fill="#00c000"/><rect x="23" y="67" width="1" height="1" fill="#00c000"/><rect x="22" y="68" width="1" height="1" fill="#00c000"/><rect x="24" y="68" width="1" height="1" fill="#00c000"/><rect x="33" y="54" width="1" height="1" fill="#000"/><rect x="36" y="54" width="1" height="1" fill="#000"/><rect x="33" y="55" width="2" height="1" fill="#000"/><rect x="36" y="55" width="1" height="1" fill="#000"/><rect x="33" y="56" width="2" height="1" fill="#000"/><rect x="36" y="56" width="1" height="1" fill="#000"/><rect x="33" y="57" width="1" height="1" fill="#000"/><rect x="35" y="57" width="2" height="1" fill="#000"/><rect x="33" y="58" width="1" height="1" fill="#000"/><rect x="35" y="58" width="2" height="1" fill="#000"/><rect x="33" y="59" width="1" height="1" fill="#000"/><rect x="36" y="59" width="1" height="1" fill="#000"/><rect x="38" y="54" width="3" height="1" fill="#000"/><rect x="38" y="55" width="1" height="1" fill="#000"/><rect x="38" y="56" width="2" height="1" fill="#000"/><rect x="38" y="57" width="1" height="1" fill="#000"/><rect x="38" y="58" width="1" height="1" fill="#000"/><rect x="38" y="59" width="3" height="1" fill="#000"/><rect x="42" y="54" width="3" height="1" fill="#000"/><rect x="42" y="55" width="1" height="1" fill="#000"/><rect x="42" y="56" width="3" height="1" fill="#000"/><rect x="44" y="57" width="1" height="1" fill="#000"/><rect x="44" y="58" width="1" height="1" fill="#000"/><rect x="42" y="59" width="3" height="1" fill="#000"/><rect x="46" y="54" width="3" height="1" fill="#000"/><rect x="46" y="55" width="1" height="1" fill="#000"/><rect x="46" y="56" width="1" height="1" fill="#000"/><rect x="46" y="57" width="1" height="1" fill="#000"/><rect x="46" y="58" width="1" height="1" fill="#000"/><rect x="46" y="59" width="3" height="1" fill="#000"/><rect x="33" y="63" width="4" height="1" fill="#000"/><rect x="33" y="64" width="1" height="1" fill="#000"/><rect x="33" y="65" width="1" height="1" fill="#000"/><rect x="35" y="65" width="2" height="1" fill="#000"/><rect x="33" y="66" width="1" height="1" fill="#000"/><rect x="36" y="66" width="1" height="1" fill="#000"/><rect x="33" y="67" width="1" height="1" fill="#000"/><rect x="36" y="67" width="1" height="1" fill="#000"/><rect x="33" y="68" width="4" height="1" fill="#000"/><rect x="38" y="63" width="3" height="1" fill="#000"/><rect x="38" y="64" width="1" height="1" fill="#000"/><rect x="40" y="64" width="1" height="1" fill="#000"/><rect x="38" y="65" width="1" height="1" fill="#000"/><rect x="40" y="65" width="1" height="1" fill="#000"/><rect x="38" y="66" width="1" height="1" fill="#000"/><rect x="40" y="66" width="1" height="1" fill="#000"/><rect x="38" y="67" width="1" height="1" fill="#000"/><rect x="40" y="67" width="1" height="1" fill="#000"/><rect x="38" y="68" width="3" height="1" fill="#000"/><rect x="42" y="63" width="3" height="1" fill="#000"/><rect x="42" y="64" width="1" height="1" fill="#000"/><rect x="44" y="64" width="1" height="1" fill="#000"/><rect x="42" y="65" width="3" height="1" fill="#000"/><rect x="44" y="66" width="1" height="1" fill="#000"/><rect x="44" y="67" width="1" height="1" fill="#000"/><rect x="44" y="68" width="1" height="1" fill="#000"/><rect x="46" y="63" width="3" height="1" fill="#000"/><rect x="46" y="64" width="1" height="1" fill="#000"/><rect x="46" y="65" width="3" height="1" fill="#000"/><rect x="48" y="66" width="1" height="1" fill="#000"/><rect x="48" y="67" width="1" height="1" fill="#000"/><rect x="46" y="68" width="3" height="1" fill="#000"/><rect x="55" y="52" width="1" height="19" fill="#b4b4b4"/><rect x="67" y="55" width="1" height="12" fill="#000"/><rect x="67" y="66" width="13" height="1" fill="#000"/><rect x="67" y="54" width="1" height="1" fill="#000"/><rect x="66" y="55" width="3" height="1" fill="#000"/><rect x="65" y="56" width="1" height="1" fill="#000"/><rect x="67" y="56" width="1" height="1" fill="#000"/><rect x="69" y="56" width="1" height="1" fill="#000"/><rect x="78" y="64" width="1" height="1" fill="#000"/><rect x="79" y="65" width="1" height="1" fill="#000"/><rect x="80" y="66" width="1" height="1" fill="#000"/><rect x="79" y="67" width="1" height="1" fill="#000"/><rect x="78" y="68" width="1" height="1" fill="#000"/><rect x="71" y="54" width="1" height="1" fill="#0000ff"/><rect x="73" y="54" width="1" height="1" fill="#0000ff"/><rect x="71" y="55" width="1" height="1" fill="#0000ff"/><rect x="73" y="55" width="1" height="1" fill="#0000ff"/><rect x="72" y="56" width="1" height="1" fill="#0000ff"/><rect x="72" y="57" width="1" height="1" fill="#0000ff"/><rect x="78" y="61" width="1" height="1" fill="#ff0000"/><rect x="80" y="61" width="1" height="1" fill="#ff0000"/><rect x="79" y="62" width="1" height="1" fill="#ff0000"/><rect x="78" y="63" width="1" height="1" fill="#ff0000"/><rect x="80" y="63" width="1" height="1" fill="#ff0000"/><circle cx="96.5" cy="58.5" r="4.6" fill="#0000ff" shape-rendering="geometricPrecision"/><path d="M93.3 56.8Q95.5 56.6 97 58.2T100.6 60.6" stroke="#00a000" stroke-width="1.7" fill="none" shape-rendering="geometricPrecision"/><path d="M93.2 60.2Q95 60.4 96.8 62.2M96.5 54.8L98.6 55.8" stroke="#00a000" stroke-width="1.4" fill="none" shape-rendering="geometricPrecision"/><rect x="89" y="63" width="1" height="1" fill="#000"/><rect x="92" y="63" width="1" height="1" fill="#000"/><rect x="94" y="63" width="1" height="1" fill="#000"/><rect x="98" y="63" width="1" height="1" fill="#000"/><rect x="100" y="63" width="1" height="1" fill="#000"/><rect x="89" y="64" width="1" height="1" fill="#000"/><rect x="91" y="64" width="1" height="1" fill="#000"/><rect x="94" y="64" width="2" height="1" fill="#000"/><rect x="97" y="64" width="2" height="1" fill="#000"/><rect x="100" y="64" width="1" height="1" fill="#000"/><rect x="89" y="65" width="2" height="1" fill="#000"/><rect x="94" y="65" width="1" height="1" fill="#000"/><rect x="96" y="65" width="1" height="1" fill="#000"/><rect x="98" y="65" width="1" height="1" fill="#000"/><rect x="100" y="65" width="1" height="1" fill="#000"/><rect x="89" y="66" width="2" height="1" fill="#000"/><rect x="94" y="66" width="1" height="1" fill="#000"/><rect x="98" y="66" width="1" height="1" fill="#000"/><rect x="100" y="66" width="1" height="1" fill="#000"/><rect x="89" y="67" width="1" height="1" fill="#000"/><rect x="91" y="67" width="1" height="1" fill="#000"/><rect x="94" y="67" width="1" height="1" fill="#000"/><rect x="98" y="67" width="1" height="1" fill="#000"/><rect x="100" y="67" width="1" height="1" fill="#000"/><rect x="89" y="68" width="1" height="1" fill="#000"/><rect x="92" y="68" width="1" height="1" fill="#000"/><rect x="94" y="68" width="1" height="1" fill="#000"/><rect x="98" y="68" width="1" height="1" fill="#000"/><rect x="100" y="68" width="4" height="1" fill="#000"/><rect x="113" y="54" width="1" height="1" fill="#ff0000"/><rect x="117" y="54" width="1" height="1" fill="#ff0000"/><rect x="114" y="55" width="1" height="1" fill="#ff0000"/><rect x="116" y="55" width="1" height="1" fill="#ff0000"/><rect x="115" y="56" width="1" height="1" fill="#ff0000"/><rect x="114" y="57" width="1" height="1" fill="#ff0000"/><rect x="116" y="57" width="1" height="1" fill="#ff0000"/><rect x="113" y="58" width="1" height="1" fill="#ff0000"/><rect x="117" y="58" width="1" height="1" fill="#ff0000"/><rect x="119" y="54" width="1" height="1" fill="#0000ff"/><rect x="123" y="54" width="1" height="1" fill="#0000ff"/><rect x="120" y="55" width="1" height="1" fill="#0000ff"/><rect x="122" y="55" width="1" height="1" fill="#0000ff"/><rect x="121" y="56" width="1" height="1" fill="#0000ff"/><rect x="121" y="57" width="1" height="1" fill="#0000ff"/><rect x="121" y="58" width="1" height="1" fill="#0000ff"/><rect x="125" y="54" width="4" height="1" fill="#00d000"/><rect x="128" y="55" width="1" height="1" fill="#00d000"/><rect x="126" y="56" width="2" height="1" fill="#00d000"/><rect x="125" y="57" width="1" height="1" fill="#00d000"/><rect x="125" y="58" width="4" height="1" fill="#00d000"/><rect x="120" y="58" width="2" height="9" fill="#000"/><path d="M117.3 63.4L121 67L124.7 63.4" stroke="#000" stroke-width="1.9" fill="none" shape-rendering="geometricPrecision"/><rect x="115" y="68" width="12" height="1" fill="#000"/><rect x="137" y="54" width="1" height="1" fill="#000"/><rect x="137" y="55" width="1" height="1" fill="#000"/><rect x="137" y="56" width="1" height="1" fill="#000"/><rect x="137" y="57" width="1" height="1" fill="#000"/><rect x="137" y="58" width="1" height="1" fill="#000"/><rect x="137" y="59" width="1" height="1" fill="#000"/><rect x="137" y="60" width="5" height="1" fill="#000"/><rect x="145" y="54" width="1" height="1" fill="#000"/><rect x="144" y="55" width="1" height="1" fill="#000"/><rect x="146" y="55" width="1" height="1" fill="#000"/><rect x="143" y="56" width="1" height="1" fill="#000"/><rect x="147" y="56" width="1" height="1" fill="#000"/><rect x="143" y="57" width="1" height="1" fill="#000"/><rect x="147" y="57" width="1" height="1" fill="#000"/><rect x="143" y="58" width="5" height="1" fill="#000"/><rect x="143" y="59" width="1" height="1" fill="#000"/><rect x="147" y="59" width="1" height="1" fill="#000"/><rect x="143" y="60" width="1" height="1" fill="#000"/><rect x="147" y="60" width="1" height="1" fill="#000"/><rect x="150" y="54" width="4" height="1" fill="#000"/><rect x="149" y="55" width="1" height="1" fill="#000"/><rect x="149" y="56" width="1" height="1" fill="#000"/><rect x="150" y="57" width="3" height="1" fill="#000"/><rect x="153" y="58" width="1" height="1" fill="#000"/><rect x="153" y="59" width="1" height="1" fill="#000"/><rect x="149" y="60" width="4" height="1" fill="#000"/><rect x="137" y="62" width="1" height="1" fill="#000"/><rect x="137" y="63" width="1" height="1" fill="#000"/><rect x="137" y="64" width="1" height="1" fill="#000"/><rect x="137" y="65" width="1" height="1" fill="#000"/><rect x="137" y="66" width="1" height="1" fill="#000"/><rect x="137" y="67" width="1" height="1" fill="#000"/><rect x="137" y="68" width="5" height="1" fill="#000"/><rect x="145" y="62" width="1" height="1" fill="#000"/><rect x="144" y="63" width="1" height="1" fill="#000"/><rect x="146" y="63" width="1" height="1" fill="#000"/><rect x="143" y="64" width="1" height="1" fill="#000"/><rect x="147" y="64" width="1" height="1" fill="#000"/><rect x="143" y="65" width="1" height="1" fill="#000"/><rect x="147" y="65" width="1" height="1" fill="#000"/><rect x="143" y="66" width="5" height="1" fill="#000"/><rect x="143" y="67" width="1" height="1" fill="#000"/><rect x="147" y="67" width="1" height="1" fill="#000"/><rect x="143" y="68" width="1" height="1" fill="#000"/><rect x="147" y="68" width="1" height="1" fill="#000"/><rect x="149" y="62" width="5" height="1" fill="#000"/><rect x="153" y="63" width="1" height="1" fill="#000"/><rect x="152" y="64" width="1" height="1" fill="#000"/><rect x="151" y="65" width="1" height="1" fill="#000"/><rect x="150" y="66" width="1" height="1" fill="#000"/><rect x="149" y="67" width="1" height="1" fill="#000"/><rect x="149" y="68" width="5" height="1" fill="#000"/><rect x="161" y="54" width="5" height="1" fill="#000"/><rect x="163" y="55" width="1" height="1" fill="#000"/><rect x="163" y="56" width="1" height="1" fill="#000"/><rect x="163" y="57" width="1" height="1" fill="#000"/><rect x="163" y="58" width="1" height="1" fill="#000"/><rect x="163" y="59" width="1" height="1" fill="#000"/><rect x="163" y="60" width="1" height="1" fill="#000"/><rect x="167" y="54" width="1" height="1" fill="#000"/><rect x="171" y="54" width="1" height="1" fill="#000"/><rect x="167" y="55" width="1" height="1" fill="#000"/><rect x="171" y="55" width="1" height="1" fill="#000"/><rect x="168" y="56" width="1" height="1" fill="#000"/><rect x="170" y="56" width="1" height="1" fill="#000"/><rect x="169" y="57" width="1" height="1" fill="#000"/><rect x="168" y="58" width="1" height="1" fill="#000"/><rect x="170" y="58" width="1" height="1" fill="#000"/><rect x="167" y="59" width="1" height="1" fill="#000"/><rect x="171" y="59" width="1" height="1" fill="#000"/><rect x="167" y="60" width="1" height="1" fill="#000"/><rect x="171" y="60" width="1" height="1" fill="#000"/><rect x="173" y="54" width="5" height="1" fill="#000"/><rect x="175" y="55" width="1" height="1" fill="#000"/><rect x="175" y="56" width="1" height="1" fill="#000"/><rect x="175" y="57" width="1" height="1" fill="#000"/><rect x="175" y="58" width="1" height="1" fill="#000"/><rect x="175" y="59" width="1" height="1" fill="#000"/><rect x="175" y="60" width="1" height="1" fill="#000"/><rect x="162" y="62" width="4" height="1" fill="#000"/><rect x="161" y="63" width="1" height="1" fill="#000"/><rect x="161" y="64" width="1" height="1" fill="#000"/><rect x="161" y="65" width="1" height="1" fill="#000"/><rect x="161" y="66" width="1" height="1" fill="#000"/><rect x="161" y="67" width="1" height="1" fill="#000"/><rect x="162" y="68" width="4" height="1" fill="#000"/><rect x="168" y="62" width="4" height="1" fill="#000"/><rect x="167" y="63" width="1" height="1" fill="#000"/><rect x="167" y="64" width="1" height="1" fill="#000"/><rect x="168" y="65" width="3" height="1" fill="#000"/><rect x="171" y="66" width="1" height="1" fill="#000"/><rect x="171" y="67" width="1" height="1" fill="#000"/><rect x="167" y="68" width="4" height="1" fill="#000"/><rect x="173" y="62" width="1" height="1" fill="#000"/><rect x="177" y="62" width="1" height="1" fill="#000"/><rect x="173" y="63" width="1" height="1" fill="#000"/><rect x="177" y="63" width="1" height="1" fill="#000"/><rect x="173" y="64" width="1" height="1" fill="#000"/><rect x="177" y="64" width="1" height="1" fill="#000"/><rect x="173" y="65" width="1" height="1" fill="#000"/><rect x="177" y="65" width="1" height="1" fill="#000"/><rect x="174" y="66" width="1" height="1" fill="#000"/><rect x="176" y="66" width="1" height="1" fill="#000"/><rect x="174" y="67" width="1" height="1" fill="#000"/><rect x="176" y="67" width="1" height="1" fill="#000"/><rect x="175" y="68" width="1" height="1" fill="#000"/><rect x="185" y="54" width="7" height="1" fill="#008000"/><rect x="192" y="54" width="6" height="1" fill="#000"/><rect x="198" y="54" width="3" height="1" fill="#008000"/><rect x="185" y="55" width="5" height="1" fill="#008000"/><rect x="190" y="55" width="3" height="1" fill="#000"/><rect x="193" y="55" width="4" height="1" fill="#ffff00"/><rect x="197" y="55" width="2" height="1" fill="#000"/><rect x="199" y="55" width="2" height="1" fill="#008000"/><rect x="185" y="56" width="4" height="1" fill="#000"/><rect x="189" y="56" width="5" height="1" fill="#ffff00"/><rect x="194" y="56" width="2" height="1" fill="#000"/><rect x="196" y="56" width="2" height="1" fill="#ffff00"/><rect x="198" y="56" width="1" height="1" fill="#000"/><rect x="199" y="56" width="2" height="1" fill="#008000"/><rect x="185" y="57" width="1" height="1" fill="#000"/><rect x="186" y="57" width="4" height="1" fill="#ffff00"/><rect x="190" y="57" width="7" height="1" fill="#000"/><rect x="197" y="57" width="2" height="1" fill="#ffff00"/><rect x="199" y="57" width="1" height="1" fill="#000"/><rect x="200" y="57" width="1" height="1" fill="#008000"/><rect x="185" y="58" width="1" height="1" fill="#000"/><rect x="186" y="58" width="2" height="1" fill="#ffff00"/><rect x="188" y="58" width="2" height="1" fill="#000"/><rect x="190" y="58" width="6" height="1" fill="#ff0000"/><rect x="196" y="58" width="1" height="1" fill="#000"/><rect x="197" y="58" width="2" height="1" fill="#ffff00"/><rect x="199" y="58" width="1" height="1" fill="#000"/><rect x="200" y="58" width="1" height="1" fill="#008000"/><rect x="185" y="59" width="1" height="1" fill="#000"/><rect x="186" y="59" width="2" height="1" fill="#ffff00"/><rect x="188" y="59" width="1" height="1" fill="#000"/><rect x="189" y="59" width="1" height="1" fill="#ff0000"/><rect x="190" y="59" width="4" height="1" fill="#000"/><rect x="194" y="59" width="2" height="1" fill="#ff0000"/><rect x="196" y="59" width="1" height="1" fill="#000"/><rect x="197" y="59" width="2" height="1" fill="#ffff00"/><rect x="199" y="59" width="1" height="1" fill="#000"/><rect x="200" y="59" width="1" height="1" fill="#008000"/><rect x="185" y="60" width="1" height="1" fill="#000"/><rect x="186" y="60" width="2" height="1" fill="#ffff00"/><rect x="188" y="60" width="1" height="1" fill="#000"/><rect x="189" y="60" width="1" height="1" fill="#ff0000"/><rect x="190" y="60" width="1" height="1" fill="#000"/><rect x="191" y="60" width="2" height="1" fill="#ff0000"/><rect x="193" y="60" width="1" height="1" fill="#000"/><rect x="194" y="60" width="2" height="1" fill="#ff0000"/><rect x="196" y="60" width="1" height="1" fill="#000"/><rect x="197" y="60" width="2" height="1" fill="#ffff00"/><rect x="199" y="60" width="1" height="1" fill="#000"/><rect x="200" y="60" width="1" height="1" fill="#008000"/><rect x="185" y="61" width="1" height="1" fill="#000"/><rect x="186" y="61" width="2" height="1" fill="#ffff00"/><rect x="188" y="61" width="1" height="1" fill="#000"/><rect x="189" y="61" width="1" height="1" fill="#ff0000"/><rect x="190" y="61" width="4" height="1" fill="#000"/><rect x="194" y="61" width="3" height="1" fill="#ff0000"/><rect x="197" y="61" width="1" height="1" fill="#000"/><rect x="198" y="61" width="1" height="1" fill="#ffff00"/><rect x="199" y="61" width="1" height="1" fill="#000"/><rect x="200" y="61" width="1" height="1" fill="#008000"/><rect x="185" y="62" width="1" height="1" fill="#000"/><rect x="186" y="62" width="2" height="1" fill="#ffff00"/><rect x="188" y="62" width="1" height="1" fill="#000"/><rect x="189" y="62" width="8" height="1" fill="#ff0000"/><rect x="197" y="62" width="1" height="1" fill="#000"/><rect x="198" y="62" width="1" height="1" fill="#ffff00"/><rect x="199" y="62" width="1" height="1" fill="#000"/><rect x="200" y="62" width="1" height="1" fill="#008000"/><rect x="185" y="63" width="1" height="1" fill="#000"/><rect x="186" y="63" width="2" height="1" fill="#ffff00"/><rect x="188" y="63" width="4" height="1" fill="#000"/><rect x="192" y="63" width="5" height="1" fill="#ff0000"/><rect x="197" y="63" width="1" height="1" fill="#000"/><rect x="198" y="63" width="1" height="1" fill="#ffff00"/><rect x="199" y="63" width="1" height="1" fill="#000"/><rect x="200" y="63" width="1" height="1" fill="#008000"/><rect x="185" y="64" width="1" height="1" fill="#000"/><rect x="186" y="64" width="5" height="1" fill="#ffff00"/><rect x="191" y="64" width="1" height="1" fill="#000"/><rect x="192" y="64" width="5" height="1" fill="#ff0000"/><rect x="197" y="64" width="1" height="1" fill="#000"/><rect x="198" y="64" width="1" height="1" fill="#ffff00"/><rect x="199" y="64" width="1" height="1" fill="#000"/><rect x="200" y="64" width="1" height="1" fill="#008000"/><rect x="185" y="65" width="1" height="1" fill="#000"/><rect x="186" y="65" width="5" height="1" fill="#ffff00"/><rect x="191" y="65" width="7" height="1" fill="#000"/><rect x="198" y="65" width="1" height="1" fill="#ffff00"/><rect x="199" y="65" width="1" height="1" fill="#000"/><rect x="200" y="65" width="1" height="1" fill="#008000"/><rect x="185" y="66" width="5" height="1" fill="#000"/><rect x="190" y="66" width="9" height="1" fill="#ffff00"/><rect x="199" y="66" width="1" height="1" fill="#000"/><rect x="200" y="66" width="1" height="1" fill="#008000"/><rect x="185" y="67" width="4" height="1" fill="#008000"/><rect x="189" y="67" width="3" height="1" fill="#000"/><rect x="192" y="67" width="1" height="1" fill="#ffff00"/><rect x="193" y="67" width="5" height="1" fill="#000"/><rect x="198" y="67" width="1" height="1" fill="#ffff00"/><rect x="199" y="67" width="1" height="1" fill="#000"/><rect x="200" y="67" width="1" height="1" fill="#008000"/><rect x="185" y="68" width="6" height="1" fill="#008000"/><rect x="191" y="68" width="3" height="1" fill="#000"/><rect x="194" y="68" width="3" height="1" fill="#008000"/><rect x="197" y="68" width="3" height="1" fill="#000"/><rect x="200" y="68" width="1" height="1" fill="#008000"/><rect x="207" y="52" width="1" height="19" fill="#b4b4b4"/><rect x="217" y="54" width="1" height="1" fill="#008000"/><rect x="218" y="54" width="7" height="1" fill="#808000"/><rect x="225" y="54" width="5" height="1" fill="#0000ff"/><rect x="230" y="54" width="3" height="1" fill="#008000"/><rect x="217" y="55" width="1" height="1" fill="#008000"/><rect x="218" y="55" width="7" height="1" fill="#808000"/><rect x="225" y="55" width="5" height="1" fill="#0000ff"/><rect x="230" y="55" width="3" height="1" fill="#008000"/><rect x="217" y="56" width="1" height="1" fill="#008000"/><rect x="218" y="56" width="7" height="1" fill="#808000"/><rect x="225" y="56" width="4" height="1" fill="#0000ff"/><rect x="229" y="56" width="4" height="1" fill="#008000"/><rect x="217" y="57" width="1" height="1" fill="#008000"/><rect x="218" y="57" width="6" height="1" fill="#808000"/><rect x="224" y="57" width="5" height="1" fill="#0000ff"/><rect x="229" y="57" width="4" height="1" fill="#008000"/><rect x="217" y="58" width="1" height="1" fill="#008000"/><rect x="218" y="58" width="3" height="1" fill="#808000"/><rect x="221" y="58" width="2" height="1" fill="#008000"/><rect x="223" y="58" width="5" height="1" fill="#0000ff"/><rect x="228" y="58" width="5" height="1" fill="#008000"/><rect x="217" y="59" width="5" height="1" fill="#800000"/><rect x="222" y="59" width="1" height="1" fill="#008000"/><rect x="223" y="59" width="5" height="1" fill="#0000ff"/><rect x="228" y="59" width="5" height="1" fill="#008000"/><rect x="217" y="60" width="5" height="1" fill="#800000"/><rect x="222" y="60" width="2" height="1" fill="#008000"/><rect x="224" y="60" width="4" height="1" fill="#0000ff"/><rect x="228" y="60" width="5" height="1" fill="#008000"/><rect x="217" y="61" width="5" height="1" fill="#800000"/><rect x="222" y="61" width="2" height="1" fill="#008000"/><rect x="224" y="61" width="5" height="1" fill="#0000ff"/><rect x="229" y="61" width="4" height="1" fill="#008000"/><rect x="217" y="62" width="5" height="1" fill="#800000"/><rect x="222" y="62" width="2" height="1" fill="#008000"/><rect x="224" y="62" width="5" height="1" fill="#0000ff"/><rect x="229" y="62" width="4" height="1" fill="#008000"/><rect x="217" y="64" width="3" height="1" fill="#000"/><rect x="218" y="65" width="1" height="1" fill="#000"/><rect x="218" y="66" width="1" height="1" fill="#000"/><rect x="218" y="67" width="1" height="1" fill="#000"/><rect x="217" y="68" width="3" height="1" fill="#000"/><rect x="221" y="64" width="1" height="1" fill="#000"/><rect x="223" y="64" width="1" height="1" fill="#000"/><rect x="221" y="65" width="3" height="1" fill="#000"/><rect x="221" y="66" width="3" height="1" fill="#000"/><rect x="221" y="67" width="1" height="1" fill="#000"/><rect x="223" y="67" width="1" height="1" fill="#000"/><rect x="221" y="68" width="1" height="1" fill="#000"/><rect x="223" y="68" width="1" height="1" fill="#000"/><rect x="226" y="64" width="1" height="1" fill="#000"/><rect x="225" y="65" width="1" height="1" fill="#000"/><rect x="227" y="65" width="1" height="1" fill="#000"/><rect x="225" y="66" width="3" height="1" fill="#000"/><rect x="225" y="67" width="1" height="1" fill="#000"/><rect x="227" y="67" width="1" height="1" fill="#000"/><rect x="225" y="68" width="1" height="1" fill="#000"/><rect x="227" y="68" width="1" height="1" fill="#000"/><rect x="230" y="64" width="3" height="1" fill="#000"/><rect x="229" y="65" width="1" height="1" fill="#000"/><rect x="229" y="66" width="1" height="1" fill="#000"/><rect x="231" y="66" width="2" height="1" fill="#000"/><rect x="229" y="67" width="1" height="1" fill="#000"/><rect x="232" y="67" width="1" height="1" fill="#000"/><rect x="230" y="68" width="3" height="1" fill="#000"/><path d="M250.5 58.5V65A1.5 1.5 0 0 1 247.5 65V58A2.5 2.5 0 0 1 252.5 58V65.5A3.5 3.5 0 0 1 245.5 65.5V58.5" stroke="#bdbdbd" stroke-width="1" fill="none" shape-rendering="geometricPrecision"/><rect x="263" y="52" width="1" height="19" fill="#b4b4b4"/><rect x="275" y="54" width="1" height="15" fill="#0000ff"/><rect x="273" y="56" width="5" height="1" fill="#0000ff"/><rect x="273" y="55" width="1" height="2" fill="#0000ff"/><rect x="277" y="55" width="1" height="2" fill="#0000ff"/><rect x="280" y="65" width="6" height="2" fill="#ff0000"/><rect x="282" y="63" width="2" height="6" fill="#ff0000"/><rect x="299" y="54" width="1" height="15" fill="#0000ff"/><rect x="297" y="56" width="5" height="1" fill="#0000ff"/><rect x="297" y="55" width="1" height="2" fill="#0000ff"/><rect x="301" y="55" width="1" height="2" fill="#0000ff"/><rect x="300" y="58" width="1" height="1" fill="#000"/><rect x="304" y="58" width="1" height="1" fill="#000"/><rect x="301" y="59" width="1" height="1" fill="#000"/><rect x="303" y="59" width="1" height="1" fill="#000"/><rect x="302" y="60" width="1" height="1" fill="#000"/><rect x="301" y="61" width="1" height="1" fill="#000"/><rect x="303" y="61" width="1" height="1" fill="#000"/><rect x="300" y="62" width="1" height="1" fill="#000"/><rect x="304" y="62" width="1" height="1" fill="#000"/><rect x="305" y="58" width="1" height="1" fill="#000"/><rect x="307" y="58" width="1" height="1" fill="#000"/><rect x="305" y="59" width="1" height="1" fill="#000"/><rect x="307" y="59" width="1" height="1" fill="#000"/><rect x="306" y="60" width="1" height="1" fill="#000"/><rect x="306" y="61" width="1" height="1" fill="#000"/><rect x="305" y="62" width="1" height="1" fill="#000"/><rect x="309" y="58" width="4" height="1" fill="#000"/><rect x="311" y="59" width="1" height="1" fill="#000"/><rect x="310" y="60" width="1" height="1" fill="#000"/><rect x="309" y="61" width="1" height="1" fill="#000"/><rect x="309" y="62" width="4" height="1" fill="#000"/><rect x="304" y="65" width="6" height="2" fill="#ff0000"/><rect x="306" y="63" width="2" height="6" fill="#ff0000"/><rect x="323" y="54" width="1" height="15" fill="#0000ff"/><rect x="321" y="56" width="5" height="1" fill="#0000ff"/><rect x="321" y="55" width="1" height="2" fill="#0000ff"/><rect x="325" y="55" width="1" height="2" fill="#0000ff"/><line x1="327" y1="62.5" x2="334.5" y2="55" stroke="#000" stroke-width="2" shape-rendering="geometricPrecision"/><rect x="330" y="54" width="6" height="2" fill="#000"/><rect x="334" y="54" width="2" height="6" fill="#000"/><rect x="328" y="65" width="6" height="2" fill="#ff0000"/><rect x="330" y="63" width="2" height="6" fill="#ff0000"/><rect x="347" y="54" width="1" height="15" fill="#0000ff"/><rect x="345" y="56" width="5" height="1" fill="#0000ff"/><rect x="345" y="55" width="1" height="2" fill="#0000ff"/><rect x="349" y="55" width="1" height="2" fill="#0000ff"/><rect x="352" y="65" width="6" height="2" fill="#ff0000"/><rect x="371" y="54" width="1" height="15" fill="#0000ff"/><rect x="369" y="56" width="5" height="1" fill="#0000ff"/><rect x="369" y="55" width="1" height="2" fill="#0000ff"/><rect x="373" y="55" width="1" height="2" fill="#0000ff"/><rect x="379" y="59" width="5" height="1" fill="#ff0000"/><rect x="378" y="60" width="2" height="1" fill="#ff0000"/><rect x="383" y="60" width="2" height="1" fill="#ff0000"/><rect x="378" y="61" width="2" height="1" fill="#ff0000"/><rect x="383" y="61" width="2" height="1" fill="#ff0000"/><rect x="382" y="62" width="2" height="1" fill="#ff0000"/><rect x="381" y="63" width="2" height="1" fill="#ff0000"/><rect x="380" y="64" width="2" height="1" fill="#ff0000"/><rect x="380" y="65" width="2" height="1" fill="#ff0000"/><rect x="380" y="67" width="2" height="1" fill="#ff0000"/><rect x="380" y="68" width="2" height="1" fill="#ff0000"/><rect x="395" y="54" width="1" height="15" fill="#0000ff"/><rect x="393" y="56" width="5" height="1" fill="#0000ff"/><rect x="393" y="55" width="1" height="2" fill="#0000ff"/><rect x="397" y="55" width="1" height="2" fill="#0000ff"/><rect x="397" y="65" width="11" height="1" fill="#ff0000"/><rect x="402" y="62" width="1" height="7" fill="#ff0000"/><rect x="398" y="64" width="1" height="3" fill="#ff0000"/><rect x="406" y="64" width="1" height="3" fill="#ff0000"/><rect x="401" y="63" width="3" height="1" fill="#ff0000"/><rect x="401" y="67" width="3" height="1" fill="#ff0000"/><rect x="419" y="54" width="1" height="15" fill="#0000ff"/><rect x="417" y="56" width="5" height="1" fill="#0000ff"/><rect x="417" y="55" width="1" height="2" fill="#0000ff"/><rect x="421" y="55" width="1" height="2" fill="#0000ff"/><rect x="420" y="57" width="1" height="1" fill="#000"/><rect x="424" y="57" width="1" height="1" fill="#000"/><rect x="421" y="58" width="1" height="1" fill="#000"/><rect x="423" y="58" width="1" height="1" fill="#000"/><rect x="422" y="59" width="1" height="1" fill="#000"/><rect x="421" y="60" width="1" height="1" fill="#000"/><rect x="423" y="60" width="1" height="1" fill="#000"/><rect x="420" y="61" width="1" height="1" fill="#000"/><rect x="424" y="61" width="1" height="1" fill="#000"/><rect x="425" y="57" width="1" height="1" fill="#000"/><rect x="427" y="57" width="1" height="1" fill="#000"/><rect x="425" y="58" width="1" height="1" fill="#000"/><rect x="427" y="58" width="1" height="1" fill="#000"/><rect x="426" y="59" width="1" height="1" fill="#000"/><rect x="426" y="60" width="1" height="1" fill="#000"/><rect x="425" y="61" width="1" height="1" fill="#000"/><rect x="429" y="57" width="4" height="1" fill="#000"/><rect x="431" y="58" width="1" height="1" fill="#000"/><rect x="430" y="59" width="1" height="1" fill="#000"/><rect x="429" y="60" width="1" height="1" fill="#000"/><rect x="429" y="61" width="4" height="1" fill="#000"/><rect x="422" y="65" width="11" height="1" fill="#ff0000"/><rect x="427" y="62" width="1" height="7" fill="#ff0000"/><rect x="423" y="64" width="1" height="3" fill="#ff0000"/><rect x="431" y="64" width="1" height="3" fill="#ff0000"/><rect x="426" y="63" width="3" height="1" fill="#ff0000"/><rect x="426" y="67" width="3" height="1" fill="#ff0000"/><rect x="443" y="54" width="1" height="15" fill="#0000ff"/><rect x="441" y="56" width="5" height="1" fill="#0000ff"/><rect x="441" y="55" width="1" height="2" fill="#0000ff"/><rect x="445" y="55" width="1" height="2" fill="#0000ff"/><line x1="447" y1="62.5" x2="454.5" y2="55" stroke="#000" stroke-width="2" shape-rendering="geometricPrecision"/><rect x="450" y="54" width="6" height="2" fill="#000"/><rect x="454" y="54" width="2" height="6" fill="#000"/><rect x="445" y="65" width="11" height="1" fill="#ff0000"/><rect x="450" y="62" width="1" height="7" fill="#ff0000"/><rect x="446" y="64" width="1" height="3" fill="#ff0000"/><rect x="454" y="64" width="1" height="3" fill="#ff0000"/><rect x="449" y="63" width="3" height="1" fill="#ff0000"/><rect x="449" y="67" width="3" height="1" fill="#ff0000"/><rect x="467" y="54" width="1" height="15" fill="#0000ff"/><rect x="465" y="56" width="5" height="1" fill="#0000ff"/><rect x="465" y="55" width="1" height="2" fill="#0000ff"/><rect x="469" y="55" width="1" height="2" fill="#0000ff"/><ellipse cx="476.4" cy="59" rx="3.1" ry="4.4" stroke="#ff0000" stroke-width="1.1" fill="none" shape-rendering="geometricPrecision"/><rect x="479" y="56" width="1" height="1" fill="#ff0000"/><rect x="478" y="57" width="3" height="1" fill="#ff0000"/><rect x="479" y="58" width="1" height="1" fill="#ff0000"/><rect x="473" y="59" width="1" height="1" fill="#ff0000"/><rect x="472" y="60" width="3" height="1" fill="#ff0000"/><rect x="473" y="61" width="1" height="1" fill="#ff0000"/><rect x="491" y="54" width="1" height="15" fill="#0000ff"/><rect x="492" y="59" width="1" height="10" fill="#000"/><rect x="489" y="56" width="5" height="1" fill="#0000ff"/><rect x="489" y="55" width="1" height="2" fill="#0000ff"/><rect x="493" y="55" width="1" height="2" fill="#0000ff"/><path d="M492.6 59.4L501.7 68V68.5H492.5M493.2 67.6L498.6 62.6" stroke="#000" stroke-width="1.25" fill="none" shape-rendering="geometricPrecision"/><ellipse cx="500.5" cy="59" rx="3.1" ry="4.4" stroke="#ff0000" stroke-width="1.1" fill="none" shape-rendering="geometricPrecision"/><rect x="503" y="56" width="1" height="1" fill="#ff0000"/><rect x="502" y="57" width="3" height="1" fill="#ff0000"/><rect x="503" y="58" width="1" height="1" fill="#ff0000"/><rect x="497" y="59" width="1" height="1" fill="#ff0000"/><rect x="496" y="60" width="3" height="1" fill="#ff0000"/><rect x="497" y="61" width="1" height="1" fill="#ff0000"/><rect x="513" y="60" width="9" height="1" fill="#ff0000"/><rect x="513" y="62" width="9" height="1" fill="#ff0000"/><rect x="513" y="66" width="9" height="1" fill="#ff0000"/><rect x="513" y="68" width="9" height="1" fill="#ff0000"/><rect x="522" y="60" width="1" height="9" fill="#0000ff"/><rect x="521" y="63" width="3" height="3" fill="#0000ff"/><rect x="524" y="64" width="5" height="1" fill="#a8a8a8"/><path d="M527.3 62L529 64.5L527.3 67" stroke="#a8a8a8" stroke-width="1" fill="none" shape-rendering="geometricPrecision"/><path d="M521.5 58.8V56.5Q521.5 54.6 523.5 54.6Q526.3 54.6 526.3 58V60.2" stroke="#000" stroke-width="1.3" fill="none" shape-rendering="geometricPrecision"/><path d="M523.8 58L526.3 60.7L528.8 58" stroke="#000" stroke-width="1.3" fill="none" shape-rendering="geometricPrecision"/><rect x="537" y="60" width="9" height="1" fill="#ff0000"/><rect x="537" y="62" width="9" height="1" fill="#ff0000"/><rect x="537" y="66" width="9" height="1" fill="#ff0000"/><rect x="537" y="68" width="9" height="1" fill="#ff0000"/><rect x="546" y="60" width="1" height="9" fill="#0000ff"/><rect x="545" y="63" width="3" height="3" fill="#0000ff"/><rect x="548" y="64" width="5" height="1" fill="#a8a8a8"/><path d="M551.3 62L553 64.5L551.3 67" stroke="#a8a8a8" stroke-width="1" fill="none" shape-rendering="geometricPrecision"/><path d="M545.5 58.8V56.5Q545.5 54.6 547.5 54.6Q550.3 54.6 550.3 58V60.2" stroke="#000" stroke-width="1.3" fill="none" shape-rendering="geometricPrecision"/><path d="M547.8 58L550.3 60.7L552.8 58" stroke="#000" stroke-width="1.3" fill="none" shape-rendering="geometricPrecision"/><path d="M537.6 54.3V59.4H543L537.6 54.3" stroke="#000" stroke-width="1.3" fill="none" shape-rendering="geometricPrecision"/><rect x="539" y="57" width="1" height="1" fill="#000"/><rect x="563" y="54" width="1" height="15" fill="#0000ff"/><rect x="561" y="56" width="5" height="1" fill="#0000ff"/><rect x="561" y="55" width="1" height="2" fill="#0000ff"/><rect x="565" y="55" width="1" height="2" fill="#0000ff"/><path d="M568.3 64.6L571.6 67.8L576.8 58" stroke="#ff0000" stroke-width="2.5" fill="none" shape-rendering="geometricPrecision"/><rect x="583" y="52" width="1" height="19" fill="#b4b4b4"/><path d="M593.5 56L594 60.5L595.5 64.3L599.7 68H603.3L606.3 64.3L608.5 59.5" stroke="#0000ff" stroke-width="2" fill="none" shape-rendering="geometricPrecision" stroke-linejoin="round"/><rect x="596" y="58" width="10" height="2" fill="#ff0000"/><rect x="600" y="54" width="2" height="10" fill="#ff0000"/><path d="M617.5 56L618 60.5L619.5 64.3L623.7 68H627.3L630.3 64.3L632.5 59.5" stroke="#0000ff" stroke-width="2" fill="none" shape-rendering="geometricPrecision" stroke-linejoin="round"/><rect x="620" y="58" width="10" height="2" fill="#ff0000"/><path d="M641.5 56L642 60.5L643.5 64.3L647.7 68H651.3L654.3 64.3L656.5 59.5" stroke="#0000ff" stroke-width="2" fill="none" shape-rendering="geometricPrecision" stroke-linejoin="round"/><rect x="647" y="61" width="5" height="5" fill="#fff"/><rect x="647" y="54" width="5" height="1" fill="#ff0000"/><rect x="646" y="55" width="2" height="1" fill="#ff0000"/><rect x="651" y="55" width="2" height="1" fill="#ff0000"/><rect x="646" y="56" width="2" height="1" fill="#ff0000"/><rect x="651" y="56" width="2" height="1" fill="#ff0000"/><rect x="650" y="57" width="2" height="1" fill="#ff0000"/><rect x="649" y="58" width="2" height="1" fill="#ff0000"/><rect x="648" y="59" width="2" height="1" fill="#ff0000"/><rect x="648" y="60" width="2" height="1" fill="#ff0000"/><rect x="648" y="62" width="2" height="1" fill="#ff0000"/><rect x="648" y="63" width="2" height="1" fill="#ff0000"/><path d="M665.5 56L666 60.5L667.5 64.3L671.7 68H675.3L678.3 64.3L680.5 59.5" stroke="#0000ff" stroke-width="2" fill="none" shape-rendering="geometricPrecision" stroke-linejoin="round"/><line x1="670.5" y1="62" x2="678.5" y2="55" stroke="#ff0000" stroke-width="2" shape-rendering="geometricPrecision"/><path d="M674 54.5H679.5V59.5" stroke="#ff0000" stroke-width="1.6" fill="none" shape-rendering="geometricPrecision"/><path d="M670 58V62.5H675" stroke="#ff0000" stroke-width="1.6" fill="none" shape-rendering="geometricPrecision"/><path d="M689.5 56L690 60.5L691.5 64.3L695.7 68H699.3L702.3 64.3L704.5 59.5" stroke="#0000ff" stroke-width="2" fill="none" shape-rendering="geometricPrecision" stroke-linejoin="round"/><rect x="692" y="54" width="1" height="1" fill="#ff0000"/><rect x="695" y="54" width="1" height="1" fill="#ff0000"/><rect x="697" y="54" width="1" height="1" fill="#ff0000"/><rect x="699" y="54" width="3" height="1" fill="#ff0000"/><rect x="704" y="54" width="1" height="1" fill="#ff0000"/><rect x="691" y="55" width="1" height="1" fill="#ff0000"/><rect x="693" y="55" width="1" height="1" fill="#ff0000"/><rect x="695" y="55" width="1" height="1" fill="#ff0000"/><rect x="697" y="55" width="1" height="1" fill="#ff0000"/><rect x="700" y="55" width="1" height="1" fill="#ff0000"/><rect x="703" y="55" width="1" height="1" fill="#ff0000"/><rect x="705" y="55" width="1" height="1" fill="#ff0000"/><rect x="691" y="56" width="3" height="1" fill="#ff0000"/><rect x="695" y="56" width="1" height="1" fill="#ff0000"/><rect x="697" y="56" width="1" height="1" fill="#ff0000"/><rect x="700" y="56" width="1" height="1" fill="#ff0000"/><rect x="703" y="56" width="1" height="1" fill="#ff0000"/><rect x="705" y="56" width="1" height="1" fill="#ff0000"/><rect x="691" y="57" width="1" height="1" fill="#ff0000"/><rect x="693" y="57" width="1" height="1" fill="#ff0000"/><rect x="695" y="57" width="1" height="1" fill="#ff0000"/><rect x="697" y="57" width="1" height="1" fill="#ff0000"/><rect x="700" y="57" width="1" height="1" fill="#ff0000"/><rect x="703" y="57" width="1" height="1" fill="#ff0000"/><rect x="705" y="57" width="1" height="1" fill="#ff0000"/><rect x="691" y="58" width="1" height="1" fill="#ff0000"/><rect x="693" y="58" width="1" height="1" fill="#ff0000"/><rect x="695" y="58" width="3" height="1" fill="#ff0000"/><rect x="700" y="58" width="1" height="1" fill="#ff0000"/><rect x="704" y="58" width="1" height="1" fill="#ff0000"/><path d="M713.5 56L714 60.5L715.5 64.3L719.7 68H723.3L726.3 64.3L728.5 59.5" stroke="#0000ff" stroke-width="2" fill="none" shape-rendering="geometricPrecision" stroke-linejoin="round"/><path d="M717.5 59.8L721.8 63.8L726.6 54.8" stroke="#fff" stroke-width="4.6" fill="none" shape-rendering="geometricPrecision"/><path d="M717.5 59.8L721.8 63.8L726.6 54.8" stroke="#ff0000" stroke-width="2.5" fill="none" shape-rendering="geometricPrecision"/><rect x="734" y="47" width="1" height="28" fill="#b4b4b4"/><rect x="739" y="51" width="2" height="2" fill="#cacaca"/><rect x="739" y="51" width="1" height="1" fill="#ececec"/><rect x="740" y="52" width="1" height="1" fill="#b8b8b8"/><rect x="739" y="55" width="2" height="2" fill="#cacaca"/><rect x="739" y="55" width="1" height="1" fill="#ececec"/><rect x="740" y="56" width="1" height="1" fill="#b8b8b8"/><rect x="739" y="59" width="2" height="2" fill="#cacaca"/><rect x="739" y="59" width="1" height="1" fill="#ececec"/><rect x="740" y="60" width="1" height="1" fill="#b8b8b8"/><rect x="739" y="63" width="2" height="2" fill="#cacaca"/><rect x="739" y="63" width="1" height="1" fill="#ececec"/><rect x="740" y="64" width="1" height="1" fill="#b8b8b8"/><rect x="739" y="67" width="2" height="2" fill="#cacaca"/><rect x="739" y="67" width="1" height="1" fill="#ececec"/><rect x="740" y="68" width="1" height="1" fill="#b8b8b8"/><rect x="739" y="71" width="2" height="2" fill="#cacaca"/><rect x="739" y="71" width="1" height="1" fill="#ececec"/><rect x="740" y="72" width="1" height="1" fill="#b8b8b8"/><rect x="749" y="54" width="16" height="1" fill="#000"/><rect x="749" y="55" width="1" height="1" fill="#000"/><rect x="750" y="55" width="3" height="1" fill="#ffff00"/><rect x="753" y="55" width="1" height="1" fill="#ff0000"/><rect x="754" y="55" width="10" height="1" fill="#00ffff"/><rect x="764" y="55" width="1" height="1" fill="#000"/><rect x="749" y="56" width="1" height="1" fill="#000"/><rect x="750" y="56" width="3" height="1" fill="#ffff00"/><rect x="753" y="56" width="7" height="1" fill="#00ffff"/><rect x="760" y="56" width="5" height="1" fill="#000"/><rect x="749" y="57" width="1" height="1" fill="#000"/><rect x="750" y="57" width="2" height="1" fill="#ffff00"/><rect x="752" y="57" width="1" height="1" fill="#ff0000"/><rect x="753" y="57" width="6" height="1" fill="#00ffff"/><rect x="759" y="57" width="3" height="1" fill="#000"/><rect x="762" y="57" width="2" height="1" fill="#00ff00"/><rect x="764" y="57" width="1" height="1" fill="#000"/><rect x="749" y="58" width="1" height="1" fill="#000"/><rect x="750" y="58" width="1" height="1" fill="#ff0000"/><rect x="751" y="58" width="4" height="1" fill="#00ffff"/><rect x="755" y="58" width="4" height="1" fill="#000"/><rect x="759" y="58" width="1" height="1" fill="#00ffff"/><rect x="760" y="58" width="1" height="1" fill="#00ff00"/><rect x="761" y="58" width="1" height="1" fill="#000"/><rect x="762" y="58" width="2" height="1" fill="#00ff00"/><rect x="764" y="58" width="1" height="1" fill="#000"/><rect x="749" y="59" width="1" height="1" fill="#000"/><rect x="750" y="59" width="4" height="1" fill="#00ffff"/><rect x="754" y="59" width="1" height="1" fill="#000"/><rect x="755" y="59" width="1" height="1" fill="#00ffff"/><rect x="756" y="59" width="1" height="1" fill="#000"/><rect x="757" y="59" width="1" height="1" fill="#00ffff"/><rect x="758" y="59" width="3" height="1" fill="#00ff00"/><rect x="761" y="59" width="1" height="1" fill="#000"/><rect x="762" y="59" width="2" height="1" fill="#00ff00"/><rect x="764" y="59" width="1" height="1" fill="#000"/><rect x="749" y="60" width="1" height="1" fill="#000"/><rect x="750" y="60" width="1" height="1" fill="#00ffff"/><rect x="751" y="60" width="2" height="1" fill="#000"/><rect x="753" y="60" width="1" height="1" fill="#00ffff"/><rect x="754" y="60" width="1" height="1" fill="#000"/><rect x="755" y="60" width="1" height="1" fill="#00ffff"/><rect x="756" y="60" width="1" height="1" fill="#000"/><rect x="757" y="60" width="4" height="1" fill="#00ff00"/><rect x="761" y="60" width="1" height="1" fill="#000"/><rect x="762" y="60" width="2" height="1" fill="#00ff00"/><rect x="764" y="60" width="1" height="1" fill="#000"/><rect x="749" y="61" width="1" height="1" fill="#000"/><rect x="750" y="61" width="1" height="1" fill="#00ffff"/><rect x="751" y="61" width="1" height="1" fill="#000"/><rect x="752" y="61" width="1" height="1" fill="#00ffff"/><rect x="753" y="61" width="1" height="1" fill="#000"/><rect x="754" y="61" width="2" height="1" fill="#00ffff"/><rect x="756" y="61" width="1" height="1" fill="#000"/><rect x="757" y="61" width="6" height="1" fill="#00ff00"/><rect x="763" y="61" width="1" height="1" fill="#ff0000"/><rect x="764" y="61" width="1" height="1" fill="#000"/><rect x="749" y="62" width="1" height="1" fill="#000"/><rect x="750" y="62" width="1" height="1" fill="#00ffff"/><rect x="751" y="62" width="1" height="1" fill="#000"/><rect x="752" y="62" width="4" height="1" fill="#00ffff"/><rect x="756" y="62" width="1" height="1" fill="#000"/><rect x="757" y="62" width="4" height="1" fill="#00ff00"/><rect x="761" y="62" width="2" height="1" fill="#ff0000"/><rect x="763" y="62" width="1" height="1" fill="#008000"/><rect x="764" y="62" width="1" height="1" fill="#000"/><rect x="749" y="63" width="1" height="1" fill="#000"/><rect x="750" y="63" width="1" height="1" fill="#00ffff"/><rect x="751" y="63" width="1" height="1" fill="#000"/><rect x="752" y="63" width="1" height="1" fill="#00ffff"/><rect x="753" y="63" width="3" height="1" fill="#00ff00"/><rect x="756" y="63" width="1" height="1" fill="#000"/><rect x="757" y="63" width="3" height="1" fill="#00ff00"/><rect x="760" y="63" width="1" height="1" fill="#ff0000"/><rect x="761" y="63" width="3" height="1" fill="#008000"/><rect x="764" y="63" width="1" height="1" fill="#000"/><rect x="749" y="64" width="1" height="1" fill="#000"/><rect x="750" y="64" width="1" height="1" fill="#00ffff"/><rect x="751" y="64" width="1" height="1" fill="#000"/><rect x="752" y="64" width="4" height="1" fill="#00ff00"/><rect x="756" y="64" width="1" height="1" fill="#000"/><rect x="757" y="64" width="2" height="1" fill="#00ff00"/><rect x="759" y="64" width="1" height="1" fill="#ff0000"/><rect x="760" y="64" width="3" height="1" fill="#008000"/><rect x="763" y="64" width="1" height="1" fill="#ff0000"/><rect x="764" y="64" width="1" height="1" fill="#000"/><rect x="749" y="65" width="1" height="1" fill="#000"/><rect x="750" y="65" width="1" height="1" fill="#00ff00"/><rect x="751" y="65" width="1" height="1" fill="#000"/><rect x="752" y="65" width="6" height="1" fill="#00ff00"/><rect x="758" y="65" width="1" height="1" fill="#ff0000"/><rect x="759" y="65" width="2" height="1" fill="#008000"/><rect x="761" y="65" width="2" height="1" fill="#ff0000"/><rect x="763" y="65" width="1" height="1" fill="#00ff00"/><rect x="764" y="65" width="1" height="1" fill="#000"/><rect x="749" y="66" width="1" height="1" fill="#000"/><rect x="750" y="66" width="1" height="1" fill="#00ff00"/><rect x="751" y="66" width="1" height="1" fill="#000"/><rect x="752" y="66" width="5" height="1" fill="#00ff00"/><rect x="757" y="66" width="1" height="1" fill="#ff0000"/><rect x="758" y="66" width="2" height="1" fill="#008000"/><rect x="760" y="66" width="1" height="1" fill="#ff0000"/><rect x="761" y="66" width="3" height="1" fill="#00ff00"/><rect x="764" y="66" width="1" height="1" fill="#000"/><rect x="749" y="67" width="1" height="1" fill="#000"/><rect x="750" y="67" width="1" height="1" fill="#00ff00"/><rect x="751" y="67" width="1" height="1" fill="#000"/><rect x="752" y="67" width="4" height="1" fill="#00ff00"/><rect x="756" y="67" width="1" height="1" fill="#ff0000"/><rect x="757" y="67" width="2" height="1" fill="#008000"/><rect x="759" y="67" width="1" height="1" fill="#ff0000"/><rect x="760" y="67" width="4" height="1" fill="#00ff00"/><rect x="764" y="67" width="1" height="1" fill="#000"/><rect x="749" y="68" width="16" height="1" fill="#000"/><rect x="773" y="54" width="16" height="1" fill="#000"/><rect x="773" y="55" width="1" height="1" fill="#000"/><rect x="774" y="55" width="14" height="1" fill="#00ffff"/><rect x="788" y="55" width="1" height="1" fill="#000"/><rect x="773" y="56" width="1" height="1" fill="#000"/><rect x="774" y="56" width="4" height="1" fill="#00ffff"/><rect x="778" y="56" width="6" height="1" fill="#ff0000"/><rect x="784" y="56" width="4" height="1" fill="#00ffff"/><rect x="788" y="56" width="1" height="1" fill="#000"/><rect x="773" y="57" width="1" height="1" fill="#000"/><rect x="774" y="57" width="3" height="1" fill="#00ffff"/><rect x="777" y="57" width="3" height="1" fill="#ff0000"/><rect x="780" y="57" width="2" height="1" fill="#00ffff"/><rect x="782" y="57" width="3" height="1" fill="#ff0000"/><rect x="785" y="57" width="3" height="1" fill="#00ffff"/><rect x="788" y="57" width="1" height="1" fill="#000"/><rect x="773" y="58" width="1" height="1" fill="#000"/><rect x="774" y="58" width="2" height="1" fill="#00ffff"/><rect x="776" y="58" width="1" height="1" fill="#ff0000"/><rect x="777" y="58" width="1" height="1" fill="#00ffff"/><rect x="778" y="58" width="1" height="1" fill="#ff0000"/><rect x="779" y="58" width="1" height="1" fill="#00ffff"/><rect x="780" y="58" width="2" height="1" fill="#ff0000"/><rect x="782" y="58" width="1" height="1" fill="#00ffff"/><rect x="783" y="58" width="1" height="1" fill="#ff0000"/><rect x="784" y="58" width="1" height="1" fill="#00ffff"/><rect x="785" y="58" width="1" height="1" fill="#ff0000"/><rect x="786" y="58" width="2" height="1" fill="#00ffff"/><rect x="788" y="58" width="1" height="1" fill="#000"/><rect x="773" y="59" width="1" height="1" fill="#000"/><rect x="774" y="59" width="1" height="1" fill="#00ffff"/><rect x="775" y="59" width="2" height="1" fill="#ff0000"/><rect x="777" y="59" width="1" height="1" fill="#00ffff"/><rect x="778" y="59" width="1" height="1" fill="#ff0000"/><rect x="779" y="59" width="1" height="1" fill="#00ffff"/><rect x="780" y="59" width="2" height="1" fill="#ff0000"/><rect x="782" y="59" width="1" height="1" fill="#00ffff"/><rect x="783" y="59" width="1" height="1" fill="#ff0000"/><rect x="784" y="59" width="1" height="1" fill="#00ffff"/><rect x="785" y="59" width="2" height="1" fill="#ff0000"/><rect x="787" y="59" width="1" height="1" fill="#00ffff"/><rect x="788" y="59" width="1" height="1" fill="#000"/><rect x="773" y="60" width="1" height="1" fill="#000"/><rect x="774" y="60" width="1" height="1" fill="#ff0000"/><rect x="775" y="60" width="2" height="1" fill="#00ffff"/><rect x="777" y="60" width="3" height="1" fill="#ff0000"/><rect x="780" y="60" width="2" height="1" fill="#00ffff"/><rect x="782" y="60" width="3" height="1" fill="#ff0000"/><rect x="785" y="60" width="2" height="1" fill="#00ffff"/><rect x="787" y="60" width="1" height="1" fill="#ff0000"/><rect x="788" y="60" width="1" height="1" fill="#000"/><rect x="773" y="61" width="1" height="1" fill="#000"/><rect x="774" y="61" width="14" height="1" fill="#ff0000"/><rect x="788" y="61" width="1" height="1" fill="#000"/><rect x="773" y="62" width="1" height="1" fill="#000"/><rect x="774" y="62" width="4" height="1" fill="#00ffff"/><rect x="778" y="62" width="1" height="1" fill="#ff0000"/><rect x="779" y="62" width="4" height="1" fill="#00ffff"/><rect x="783" y="62" width="1" height="1" fill="#ff0000"/><rect x="784" y="62" width="4" height="1" fill="#00ffff"/><rect x="788" y="62" width="1" height="1" fill="#000"/><rect x="773" y="63" width="1" height="1" fill="#000"/><rect x="774" y="63" width="4" height="1" fill="#00ffff"/><rect x="778" y="63" width="6" height="1" fill="#ff0000"/><rect x="784" y="63" width="4" height="1" fill="#00ffff"/><rect x="788" y="63" width="1" height="1" fill="#000"/><rect x="773" y="64" width="1" height="1" fill="#000"/><rect x="774" y="64" width="3" height="1" fill="#00ffff"/><rect x="777" y="64" width="1" height="1" fill="#ff0000"/><rect x="778" y="64" width="2" height="1" fill="#00ffff"/><rect x="780" y="64" width="2" height="1" fill="#ff0000"/><rect x="782" y="64" width="2" height="1" fill="#00ffff"/><rect x="784" y="64" width="1" height="1" fill="#ff0000"/><rect x="785" y="64" width="3" height="1" fill="#00ffff"/><rect x="788" y="64" width="1" height="1" fill="#000"/><rect x="773" y="65" width="1" height="1" fill="#000"/><rect x="774" y="65" width="2" height="1" fill="#00ffff"/><rect x="776" y="65" width="1" height="1" fill="#ff0000"/><rect x="777" y="65" width="2" height="1" fill="#00ffff"/><rect x="779" y="65" width="1" height="1" fill="#ff0000"/><rect x="780" y="65" width="2" height="1" fill="#00ffff"/><rect x="782" y="65" width="2" height="1" fill="#ff0000"/><rect x="784" y="65" width="1" height="1" fill="#00ffff"/><rect x="785" y="65" width="1" height="1" fill="#ff0000"/><rect x="786" y="65" width="2" height="1" fill="#00ffff"/><rect x="788" y="65" width="1" height="1" fill="#000"/><rect x="773" y="66" width="1" height="1" fill="#000"/><rect x="774" y="66" width="2" height="1" fill="#00ffff"/><rect x="776" y="66" width="3" height="1" fill="#ff0000"/><rect x="779" y="66" width="5" height="1" fill="#00ffff"/><rect x="784" y="66" width="1" height="1" fill="#ff0000"/><rect x="785" y="66" width="1" height="1" fill="#00ffff"/><rect x="786" y="66" width="1" height="1" fill="#ff0000"/><rect x="787" y="66" width="1" height="1" fill="#00ffff"/><rect x="788" y="66" width="1" height="1" fill="#000"/><rect x="773" y="67" width="1" height="1" fill="#000"/><rect x="774" y="67" width="1" height="1" fill="#00ffff"/><rect x="775" y="67" width="2" height="1" fill="#ff0000"/><rect x="777" y="67" width="8" height="1" fill="#00ffff"/><rect x="785" y="67" width="3" height="1" fill="#ff0000"/><rect x="788" y="67" width="1" height="1" fill="#000"/><rect x="773" y="68" width="16" height="1" fill="#000"/><rect x="797" y="54" width="16" height="1" fill="#000"/><rect x="797" y="55" width="1" height="1" fill="#000"/><rect x="798" y="55" width="3" height="1" fill="#ffff00"/><rect x="801" y="55" width="1" height="1" fill="#ff0000"/><rect x="802" y="55" width="10" height="1" fill="#00ffff"/><rect x="812" y="55" width="1" height="1" fill="#000"/><rect x="797" y="56" width="1" height="1" fill="#000"/><rect x="798" y="56" width="3" height="1" fill="#ffff00"/><rect x="801" y="56" width="4" height="1" fill="#00ffff"/><rect x="805" y="56" width="2" height="1" fill="#0000ff"/><rect x="807" y="56" width="5" height="1" fill="#00ffff"/><rect x="812" y="56" width="1" height="1" fill="#000"/><rect x="797" y="57" width="1" height="1" fill="#000"/><rect x="798" y="57" width="2" height="1" fill="#ffff00"/><rect x="800" y="57" width="1" height="1" fill="#ff0000"/><rect x="801" y="57" width="4" height="1" fill="#00ffff"/><rect x="805" y="57" width="2" height="1" fill="#0000ff"/><rect x="807" y="57" width="5" height="1" fill="#00ffff"/><rect x="812" y="57" width="1" height="1" fill="#000"/><rect x="797" y="58" width="1" height="1" fill="#000"/><rect x="798" y="58" width="1" height="1" fill="#ff0000"/><rect x="799" y="58" width="3" height="1" fill="#00ffff"/><rect x="802" y="58" width="5" height="1" fill="#0000ff"/><rect x="807" y="58" width="5" height="1" fill="#00ffff"/><rect x="812" y="58" width="1" height="1" fill="#000"/><rect x="797" y="59" width="1" height="1" fill="#000"/><rect x="798" y="59" width="4" height="1" fill="#00ffff"/><rect x="802" y="59" width="5" height="1" fill="#0000ff"/><rect x="807" y="59" width="5" height="1" fill="#00ffff"/><rect x="812" y="59" width="1" height="1" fill="#000"/><rect x="797" y="60" width="1" height="1" fill="#000"/><rect x="798" y="60" width="7" height="1" fill="#00ffff"/><rect x="805" y="60" width="5" height="1" fill="#0000ff"/><rect x="810" y="60" width="2" height="1" fill="#00ffff"/><rect x="812" y="60" width="1" height="1" fill="#000"/><rect x="797" y="61" width="1" height="1" fill="#000"/><rect x="798" y="61" width="7" height="1" fill="#00ffff"/><rect x="805" y="61" width="5" height="1" fill="#0000ff"/><rect x="810" y="61" width="2" height="1" fill="#00ffff"/><rect x="812" y="61" width="1" height="1" fill="#000"/><rect x="797" y="62" width="1" height="1" fill="#000"/><rect x="798" y="62" width="7" height="1" fill="#00ffff"/><rect x="805" y="62" width="2" height="1" fill="#0000ff"/><rect x="807" y="62" width="5" height="1" fill="#00ffff"/><rect x="812" y="62" width="1" height="1" fill="#000"/><rect x="797" y="63" width="1" height="1" fill="#000"/><rect x="798" y="63" width="7" height="1" fill="#00ffff"/><rect x="805" y="63" width="2" height="1" fill="#0000ff"/><rect x="807" y="63" width="3" height="1" fill="#00ffff"/><rect x="810" y="63" width="3" height="1" fill="#000"/><rect x="797" y="64" width="1" height="1" fill="#000"/><rect x="798" y="64" width="7" height="1" fill="#00ffff"/><rect x="805" y="64" width="2" height="1" fill="#0000ff"/><rect x="807" y="64" width="1" height="1" fill="#00ffff"/><rect x="808" y="64" width="2" height="1" fill="#000"/><rect x="810" y="64" width="2" height="1" fill="#00ff00"/><rect x="812" y="64" width="1" height="1" fill="#000"/><rect x="797" y="65" width="1" height="1" fill="#000"/><rect x="798" y="65" width="7" height="1" fill="#00ffff"/><rect x="805" y="65" width="3" height="1" fill="#000"/><rect x="808" y="65" width="4" height="1" fill="#00ff00"/><rect x="812" y="65" width="1" height="1" fill="#000"/><rect x="797" y="66" width="1" height="1" fill="#000"/><rect x="798" y="66" width="5" height="1" fill="#00ffff"/><rect x="803" y="66" width="2" height="1" fill="#000"/><rect x="805" y="66" width="7" height="1" fill="#00ff00"/><rect x="812" y="66" width="1" height="1" fill="#000"/><rect x="797" y="67" width="1" height="1" fill="#000"/><rect x="798" y="67" width="3" height="1" fill="#00ffff"/><rect x="801" y="67" width="2" height="1" fill="#000"/><rect x="803" y="67" width="9" height="1" fill="#00ff00"/><rect x="812" y="67" width="1" height="1" fill="#000"/><rect x="797" y="68" width="16" height="1" fill="#000"/><rect x="821" y="54" width="16" height="1" fill="#000"/><rect x="821" y="55" width="1" height="1" fill="#000"/><rect x="822" y="55" width="14" height="1" fill="#00ffff"/><rect x="836" y="55" width="1" height="1" fill="#000"/><rect x="821" y="56" width="1" height="1" fill="#000"/><rect x="822" y="56" width="4" height="1" fill="#00ffff"/><rect x="826" y="56" width="7" height="1" fill="#000"/><rect x="833" y="56" width="3" height="1" fill="#00ffff"/><rect x="836" y="56" width="1" height="1" fill="#000"/><rect x="821" y="57" width="1" height="1" fill="#000"/><rect x="822" y="57" width="4" height="1" fill="#00ffff"/><rect x="826" y="57" width="1" height="1" fill="#000"/><rect x="827" y="57" width="5" height="1" fill="#ffffff"/><rect x="832" y="57" width="1" height="1" fill="#000"/><rect x="833" y="57" width="3" height="1" fill="#00ffff"/><rect x="836" y="57" width="1" height="1" fill="#000"/><rect x="821" y="58" width="1" height="1" fill="#000"/><rect x="822" y="58" width="4" height="1" fill="#00ffff"/><rect x="826" y="58" width="1" height="1" fill="#000"/><rect x="827" y="58" width="5" height="1" fill="#ffffff"/><rect x="832" y="58" width="1" height="1" fill="#000"/><rect x="833" y="58" width="3" height="1" fill="#00ffff"/><rect x="836" y="58" width="1" height="1" fill="#000"/><rect x="821" y="59" width="6" height="1" fill="#000"/><rect x="827" y="59" width="5" height="1" fill="#ffffff"/><rect x="832" y="59" width="5" height="1" fill="#000"/><rect x="821" y="60" width="1" height="1" fill="#000"/><rect x="822" y="60" width="4" height="1" fill="#808000"/><rect x="826" y="60" width="1" height="1" fill="#000"/><rect x="827" y="60" width="5" height="1" fill="#ffffff"/><rect x="832" y="60" width="1" height="1" fill="#000"/><rect x="833" y="60" width="3" height="1" fill="#808000"/><rect x="836" y="60" width="1" height="1" fill="#000"/><rect x="821" y="61" width="6" height="1" fill="#000"/><rect x="827" y="61" width="5" height="1" fill="#ffffff"/><rect x="832" y="61" width="5" height="1" fill="#000"/><rect x="821" y="62" width="1" height="1" fill="#000"/><rect x="822" y="62" width="4" height="1" fill="#ffff00"/><rect x="826" y="62" width="1" height="1" fill="#000"/><rect x="827" y="62" width="5" height="1" fill="#ffffff"/><rect x="832" y="62" width="1" height="1" fill="#000"/><rect x="833" y="62" width="3" height="1" fill="#ffff00"/><rect x="836" y="62" width="1" height="1" fill="#000"/><rect x="821" y="63" width="1" height="1" fill="#000"/><rect x="822" y="63" width="4" height="1" fill="#ffff00"/><rect x="826" y="63" width="1" height="1" fill="#000"/><rect x="827" y="63" width="5" height="1" fill="#ffffff"/><rect x="832" y="63" width="1" height="1" fill="#000"/><rect x="833" y="63" width="3" height="1" fill="#ffff00"/><rect x="836" y="63" width="1" height="1" fill="#000"/><rect x="821" y="64" width="6" height="1" fill="#000"/><rect x="827" y="64" width="5" height="1" fill="#ffffff"/><rect x="832" y="64" width="5" height="1" fill="#000"/><rect x="821" y="65" width="1" height="1" fill="#000"/><rect x="822" y="65" width="4" height="1" fill="#800000"/><rect x="826" y="65" width="1" height="1" fill="#000"/><rect x="827" y="65" width="5" height="1" fill="#ffffff"/><rect x="832" y="65" width="1" height="1" fill="#000"/><rect x="833" y="65" width="3" height="1" fill="#800000"/><rect x="836" y="65" width="1" height="1" fill="#000"/><rect x="821" y="66" width="1" height="1" fill="#000"/><rect x="822" y="66" width="4" height="1" fill="#800000"/><rect x="826" y="66" width="7" height="1" fill="#000"/><rect x="833" y="66" width="3" height="1" fill="#800000"/><rect x="836" y="66" width="1" height="1" fill="#000"/><rect x="821" y="67" width="1" height="1" fill="#000"/><rect x="822" y="67" width="14" height="1" fill="#800000"/><rect x="836" y="67" width="1" height="1" fill="#000"/><rect x="821" y="68" width="16" height="1" fill="#000"/><rect x="842" y="47" width="1" height="28" fill="#b4b4b4"/><rect x="847" y="51" width="2" height="2" fill="#cacaca"/><rect x="847" y="51" width="1" height="1" fill="#ececec"/><rect x="848" y="52" width="1" height="1" fill="#b8b8b8"/><rect x="847" y="55" width="2" height="2" fill="#cacaca"/><rect x="847" y="55" width="1" height="1" fill="#ececec"/><rect x="848" y="56" width="1" height="1" fill="#b8b8b8"/><rect x="847" y="59" width="2" height="2" fill="#cacaca"/><rect x="847" y="59" width="1" height="1" fill="#ececec"/><rect x="848" y="60" width="1" height="1" fill="#b8b8b8"/><rect x="847" y="63" width="2" height="2" fill="#cacaca"/><rect x="847" y="63" width="1" height="1" fill="#ececec"/><rect x="848" y="64" width="1" height="1" fill="#b8b8b8"/><rect x="847" y="67" width="2" height="2" fill="#cacaca"/><rect x="847" y="67" width="1" height="1" fill="#ececec"/><rect x="848" y="68" width="1" height="1" fill="#b8b8b8"/><rect x="847" y="71" width="2" height="2" fill="#cacaca"/><rect x="847" y="71" width="1" height="1" fill="#ececec"/><rect x="848" y="72" width="1" height="1" fill="#b8b8b8"/><rect x="852" y="50" width="83" height="1" fill="#d4d4d4"/><rect x="852" y="50" width="1" height="24" fill="#d4d4d4"/><rect x="853" y="51" width="82" height="1" fill="#ffffff"/><rect x="853" y="51" width="1" height="23" fill="#ffffff"/><rect x="854" y="52" width="81" height="21" fill="#efefef"/></g></svg>
<svg width="935" height="102" viewBox="0 0 935 102"><g><path d="M0.5 97.5L20.5 77.5H117.5Q120.5 77.5 120.5 80.5V97.5" stroke="#a0a0a0" stroke-width="1" fill="#f0f0f0" shape-rendering="geometricPrecision"/><path d="M421.5 84L428.5 77.5H523.5Q526.5 77.5 526.5 80.5V97.5H421.5" stroke="#a0a0a0" stroke-width="1" fill="#f0f0f0" shape-rendering="geometricPrecision"/><path d="M338.5 84L345.5 77.5H418.5Q421.5 77.5 421.5 80.5V97.5H338.5" stroke="#a0a0a0" stroke-width="1" fill="#f0f0f0" shape-rendering="geometricPrecision"/><path d="M245.5 84L252.5 77.5H335.5Q338.5 77.5 338.5 80.5V97.5H245.5" stroke="#a0a0a0" stroke-width="1" fill="#f0f0f0" shape-rendering="geometricPrecision"/><path d="M106 98L126.5 77.5H242.5Q245.5 77.5 245.5 80.5V98Z" stroke="#a0a0a0" stroke-width="1" fill="#ffffff" shape-rendering="geometricPrecision"/><rect x="22" y="79" width="16" height="16" fill="#00ffff"/><rect x="23" y="80" width="1" height="1" fill="#ffffff"/><rect x="25" y="80" width="11" height="1" fill="#000"/><rect x="26" y="82" width="1" height="1" fill="#ffffff"/><rect x="28" y="82" width="8" height="1" fill="#000"/><rect x="26" y="84" width="1" height="1" fill="#ffffff"/><rect x="28" y="84" width="8" height="1" fill="#000"/><rect x="26" y="87" width="1" height="1" fill="#ffffff"/><rect x="28" y="87" width="8" height="1" fill="#000"/><rect x="26" y="89" width="1" height="1" fill="#ffffff"/><rect x="28" y="89" width="8" height="1" fill="#000"/><rect x="26" y="92" width="1" height="1" fill="#ffffff"/><rect x="28" y="92" width="8" height="1" fill="#000"/><rect x="128" y="79" width="1" height="1" fill="#ff0000"/><rect x="129" y="79" width="1" height="1" fill="#ffff00"/><rect x="130" y="79" width="1" height="1" fill="#ff0000"/><rect x="131" y="79" width="12" height="1" fill="#00ffff"/><rect x="143" y="79" width="1" height="1" fill="#000"/><rect x="128" y="80" width="3" height="1" fill="#ffff00"/><rect x="131" y="80" width="12" height="1" fill="#00ffff"/><rect x="143" y="80" width="1" height="1" fill="#000"/><rect x="128" y="81" width="1" height="1" fill="#ff0000"/><rect x="129" y="81" width="1" height="1" fill="#ffff00"/><rect x="130" y="81" width="1" height="1" fill="#ff0000"/><rect x="131" y="81" width="12" height="1" fill="#00ffff"/><rect x="143" y="81" width="1" height="1" fill="#000"/><rect x="128" y="82" width="15" height="1" fill="#00ffff"/><rect x="143" y="82" width="1" height="1" fill="#000"/><rect x="128" y="83" width="15" height="1" fill="#00ffff"/><rect x="143" y="83" width="1" height="1" fill="#000"/><rect x="128" y="84" width="15" height="1" fill="#00ffff"/><rect x="143" y="84" width="1" height="1" fill="#000"/><rect x="128" y="85" width="1" height="1" fill="#00ffff"/><rect x="129" y="85" width="1" height="1" fill="#000"/><rect x="130" y="85" width="12" height="1" fill="#00ffff"/><rect x="142" y="85" width="2" height="1" fill="#000"/><rect x="128" y="86" width="2" height="1" fill="#00ffff"/><rect x="130" y="86" width="1" height="1" fill="#000"/><rect x="131" y="86" width="11" height="1" fill="#00ffff"/><rect x="142" y="86" width="2" height="1" fill="#000"/><rect x="128" y="87" width="3" height="1" fill="#00ffff"/><rect x="131" y="87" width="1" height="1" fill="#000"/><rect x="132" y="87" width="3" height="1" fill="#00ffff"/><rect x="135" y="87" width="1" height="1" fill="#000"/><rect x="136" y="87" width="3" height="1" fill="#00ffff"/><rect x="139" y="87" width="5" height="1" fill="#000"/><rect x="128" y="88" width="4" height="1" fill="#00ffff"/><rect x="132" y="88" width="2" height="1" fill="#000"/><rect x="134" y="88" width="8" height="1" fill="#00ffff"/><rect x="142" y="88" width="2" height="1" fill="#000"/><rect x="128" y="89" width="14" height="1" fill="#00ffff"/><rect x="142" y="89" width="2" height="1" fill="#000"/><rect x="128" y="90" width="14" height="1" fill="#00ffff"/><rect x="142" y="90" width="2" height="1" fill="#000"/><rect x="128" y="91" width="14" height="1" fill="#00ffff"/><rect x="142" y="91" width="2" height="1" fill="#000"/><rect x="128" y="92" width="14" height="1" fill="#00ff00"/><rect x="142" y="92" width="2" height="1" fill="#000"/><rect x="128" y="93" width="15" height="1" fill="#00ff00"/><rect x="143" y="93" width="1" height="1" fill="#000"/><rect x="128" y="94" width="16" height="1" fill="#000"/><rect x="227" y="81" width="15" height="15" fill="#c75050"/><path d="M232.4 86.6L236.6 90.8M236.6 86.6L232.4 90.8" stroke="#ffffff" stroke-width="1.6" fill="none" shape-rendering="geometricPrecision"/><rect x="253" y="79" width="14" height="1" fill="#00ffff"/><rect x="267" y="79" width="1" height="1" fill="#0000ff"/><rect x="268" y="79" width="1" height="1" fill="#000"/><rect x="253" y="80" width="12" height="1" fill="#00ffff"/><rect x="265" y="80" width="2" height="1" fill="#ff0000"/><rect x="267" y="80" width="1" height="1" fill="#0000ff"/><rect x="268" y="80" width="1" height="1" fill="#000"/><rect x="253" y="81" width="10" height="1" fill="#00ffff"/><rect x="263" y="81" width="4" height="1" fill="#ff0000"/><rect x="267" y="81" width="1" height="1" fill="#00ffff"/><rect x="268" y="81" width="1" height="1" fill="#000"/><rect x="253" y="82" width="8" height="1" fill="#00ffff"/><rect x="261" y="82" width="4" height="1" fill="#ff0000"/><rect x="265" y="82" width="3" height="1" fill="#00ffff"/><rect x="268" y="82" width="1" height="1" fill="#000"/><rect x="253" y="83" width="7" height="1" fill="#00ffff"/><rect x="260" y="83" width="2" height="1" fill="#0000ff"/><rect x="262" y="83" width="6" height="1" fill="#00ffff"/><rect x="268" y="83" width="1" height="1" fill="#000"/><rect x="253" y="84" width="7" height="1" fill="#00ffff"/><rect x="260" y="84" width="2" height="1" fill="#0000ff"/><rect x="262" y="84" width="6" height="1" fill="#00ffff"/><rect x="268" y="84" width="1" height="1" fill="#000"/><rect x="253" y="85" width="7" height="1" fill="#00ffff"/><rect x="260" y="85" width="2" height="1" fill="#ff0000"/><rect x="262" y="85" width="6" height="1" fill="#00ffff"/><rect x="268" y="85" width="1" height="1" fill="#000"/><rect x="253" y="86" width="8" height="1" fill="#00ffff"/><rect x="261" y="86" width="2" height="1" fill="#ff0000"/><rect x="263" y="86" width="5" height="1" fill="#00ffff"/><rect x="268" y="86" width="1" height="1" fill="#000"/><rect x="253" y="87" width="9" height="1" fill="#00ffff"/><rect x="262" y="87" width="1" height="1" fill="#ff0000"/><rect x="263" y="87" width="5" height="1" fill="#00ffff"/><rect x="268" y="87" width="1" height="1" fill="#000"/><rect x="253" y="88" width="9" height="1" fill="#00ffff"/><rect x="262" y="88" width="2" height="1" fill="#ff0000"/><rect x="264" y="88" width="4" height="1" fill="#00ffff"/><rect x="268" y="88" width="1" height="1" fill="#000"/><rect x="253" y="89" width="9" height="1" fill="#00ffff"/><rect x="262" y="89" width="2" height="1" fill="#0000ff"/><rect x="264" y="89" width="4" height="1" fill="#00ffff"/><rect x="268" y="89" width="1" height="1" fill="#000"/><rect x="253" y="90" width="8" height="1" fill="#00ffff"/><rect x="261" y="90" width="1" height="1" fill="#ff0000"/><rect x="262" y="90" width="2" height="1" fill="#0000ff"/><rect x="264" y="90" width="4" height="1" fill="#00ffff"/><rect x="268" y="90" width="1" height="1" fill="#000"/><rect x="253" y="91" width="5" height="1" fill="#00ffff"/><rect x="258" y="91" width="4" height="1" fill="#ff0000"/><rect x="262" y="91" width="6" height="1" fill="#00ffff"/><rect x="268" y="91" width="1" height="1" fill="#000"/><rect x="253" y="92" width="2" height="1" fill="#00ffff"/><rect x="255" y="92" width="4" height="1" fill="#ff0000"/><rect x="259" y="92" width="9" height="1" fill="#00ffff"/><rect x="268" y="92" width="1" height="1" fill="#000"/><rect x="253" y="93" width="2" height="1" fill="#0000ff"/><rect x="255" y="93" width="1" height="1" fill="#ff0000"/><rect x="256" y="93" width="12" height="1" fill="#00ffff"/><rect x="268" y="93" width="1" height="1" fill="#000"/><rect x="253" y="94" width="16" height="1" fill="#000"/><rect x="346" y="79" width="1" height="1" fill="#ff0000"/><rect x="347" y="79" width="1" height="1" fill="#ffff00"/><rect x="348" y="79" width="1" height="1" fill="#ff0000"/><rect x="349" y="79" width="12" height="1" fill="#00ffff"/><rect x="361" y="79" width="1" height="1" fill="#000"/><rect x="346" y="80" width="3" height="1" fill="#ffff00"/><rect x="349" y="80" width="11" height="1" fill="#00ffff"/><rect x="360" y="80" width="2" height="1" fill="#000"/><rect x="346" y="81" width="1" height="1" fill="#ff0000"/><rect x="347" y="81" width="1" height="1" fill="#ffff00"/><rect x="348" y="81" width="1" height="1" fill="#ff0000"/><rect x="349" y="81" width="10" height="1" fill="#00ffff"/><rect x="359" y="81" width="1" height="1" fill="#000"/><rect x="360" y="81" width="1" height="1" fill="#00ff00"/><rect x="361" y="81" width="1" height="1" fill="#000"/><rect x="346" y="82" width="11" height="1" fill="#00ffff"/><rect x="357" y="82" width="1" height="1" fill="#000"/><rect x="358" y="82" width="1" height="1" fill="#00ff00"/><rect x="359" y="82" width="1" height="1" fill="#000"/><rect x="360" y="82" width="1" height="1" fill="#00ff00"/><rect x="361" y="82" width="1" height="1" fill="#000"/><rect x="346" y="83" width="1" height="1" fill="#00ffff"/><rect x="347" y="83" width="1" height="1" fill="#000"/><rect x="348" y="83" width="3" height="1" fill="#00ffff"/><rect x="351" y="83" width="1" height="1" fill="#000"/><rect x="352" y="83" width="2" height="1" fill="#00ffff"/><rect x="354" y="83" width="1" height="1" fill="#000"/><rect x="355" y="83" width="2" height="1" fill="#00ffff"/><rect x="357" y="83" width="3" height="1" fill="#00ff00"/><rect x="360" y="83" width="1" height="1" fill="#ff0000"/><rect x="361" y="83" width="1" height="1" fill="#000"/><rect x="346" y="84" width="1" height="1" fill="#00ffff"/><rect x="347" y="84" width="2" height="1" fill="#000"/><rect x="349" y="84" width="6" height="1" fill="#00ffff"/><rect x="355" y="84" width="5" height="1" fill="#00ff00"/><rect x="360" y="84" width="1" height="1" fill="#008080"/><rect x="361" y="84" width="1" height="1" fill="#000"/><rect x="346" y="85" width="1" height="1" fill="#00ffff"/><rect x="347" y="85" width="1" height="1" fill="#000"/><rect x="348" y="85" width="6" height="1" fill="#00ffff"/><rect x="354" y="85" width="5" height="1" fill="#00ff00"/><rect x="359" y="85" width="2" height="1" fill="#008080"/><rect x="361" y="85" width="1" height="1" fill="#000"/><rect x="346" y="86" width="1" height="1" fill="#00ffff"/><rect x="347" y="86" width="1" height="1" fill="#000"/><rect x="348" y="86" width="4" height="1" fill="#00ffff"/><rect x="352" y="86" width="6" height="1" fill="#00ff00"/><rect x="358" y="86" width="1" height="1" fill="#ff0000"/><rect x="359" y="86" width="2" height="1" fill="#008080"/><rect x="361" y="86" width="1" height="1" fill="#000"/><rect x="346" y="87" width="1" height="1" fill="#00ffff"/><rect x="347" y="87" width="1" height="1" fill="#000"/><rect x="348" y="87" width="3" height="1" fill="#00ffff"/><rect x="351" y="87" width="6" height="1" fill="#00ff00"/><rect x="357" y="87" width="1" height="1" fill="#ff0000"/><rect x="358" y="87" width="2" height="1" fill="#008080"/><rect x="360" y="87" width="1" height="1" fill="#ff0000"/><rect x="361" y="87" width="1" height="1" fill="#000"/><rect x="346" y="88" width="1" height="1" fill="#00ffff"/><rect x="347" y="88" width="1" height="1" fill="#000"/><rect x="348" y="88" width="1" height="1" fill="#00ffff"/><rect x="349" y="88" width="8" height="1" fill="#00ff00"/><rect x="357" y="88" width="3" height="1" fill="#008080"/><rect x="360" y="88" width="1" height="1" fill="#00ff00"/><rect x="361" y="88" width="1" height="1" fill="#000"/><rect x="346" y="89" width="1" height="1" fill="#00ffff"/><rect x="347" y="89" width="1" height="1" fill="#000"/><rect x="348" y="89" width="8" height="1" fill="#00ff00"/><rect x="356" y="89" width="3" height="1" fill="#008080"/><rect x="359" y="89" width="1" height="1" fill="#ff0000"/><rect x="360" y="89" width="1" height="1" fill="#00ff00"/><rect x="361" y="89" width="1" height="1" fill="#000"/><rect x="346" y="90" width="1" height="1" fill="#00ff00"/><rect x="347" y="90" width="1" height="1" fill="#000"/><rect x="348" y="90" width="7" height="1" fill="#00ff00"/><rect x="355" y="90" width="4" height="1" fill="#008080"/><rect x="359" y="90" width="1" height="1" fill="#ff0000"/><rect x="360" y="90" width="1" height="1" fill="#00ff00"/><rect x="361" y="90" width="1" height="1" fill="#000"/><rect x="346" y="91" width="1" height="1" fill="#00ff00"/><rect x="347" y="91" width="1" height="1" fill="#000"/><rect x="348" y="91" width="6" height="1" fill="#00ff00"/><rect x="354" y="91" width="5" height="1" fill="#008080"/><rect x="359" y="91" width="2" height="1" fill="#00ff00"/><rect x="361" y="91" width="1" height="1" fill="#000"/><rect x="346" y="92" width="1" height="1" fill="#00ff00"/><rect x="347" y="92" width="1" height="1" fill="#000"/><rect x="348" y="92" width="4" height="1" fill="#00ff00"/><rect x="352" y="92" width="1" height="1" fill="#ff0000"/><rect x="353" y="92" width="5" height="1" fill="#008080"/><rect x="358" y="92" width="3" height="1" fill="#00ff00"/><rect x="361" y="92" width="1" height="1" fill="#000"/><rect x="346" y="93" width="1" height="1" fill="#00ff00"/><rect x="347" y="93" width="1" height="1" fill="#000"/><rect x="348" y="93" width="3" height="1" fill="#00ff00"/><rect x="351" y="93" width="1" height="1" fill="#ff0000"/><rect x="352" y="93" width="4" height="1" fill="#008080"/><rect x="356" y="93" width="1" height="1" fill="#ff0000"/><rect x="357" y="93" width="4" height="1" fill="#00ff00"/><rect x="361" y="93" width="1" height="1" fill="#000"/><rect x="346" y="94" width="16" height="1" fill="#000"/><rect x="430" y="79" width="15" height="1" fill="#00ffff"/><rect x="445" y="79" width="1" height="1" fill="#000"/><rect x="430" y="80" width="13" height="1" fill="#00ffff"/><rect x="443" y="80" width="1" height="1" fill="#000"/><rect x="444" y="80" width="1" height="1" fill="#00ffff"/><rect x="445" y="80" width="1" height="1" fill="#000"/><rect x="430" y="81" width="10" height="1" fill="#00ffff"/><rect x="440" y="81" width="1" height="1" fill="#000"/><rect x="441" y="81" width="4" height="1" fill="#00ffff"/><rect x="445" y="81" width="1" height="1" fill="#000"/><rect x="430" y="82" width="1" height="1" fill="#00ffff"/><rect x="431" y="82" width="8" height="1" fill="#000"/><rect x="439" y="82" width="6" height="1" fill="#00ffff"/><rect x="445" y="82" width="1" height="1" fill="#000"/><rect x="430" y="83" width="15" height="1" fill="#00ffff"/><rect x="445" y="83" width="1" height="1" fill="#000"/><rect x="430" y="84" width="15" height="1" fill="#00ffff"/><rect x="445" y="84" width="1" height="1" fill="#000"/><rect x="430" y="85" width="15" height="1" fill="#909090"/><rect x="445" y="85" width="1" height="1" fill="#000"/><rect x="430" y="86" width="2" height="1" fill="#00ffff"/><rect x="432" y="86" width="1" height="1" fill="#909090"/><rect x="433" y="86" width="9" height="1" fill="#00ffff"/><rect x="442" y="86" width="1" height="1" fill="#909090"/><rect x="443" y="86" width="1" height="1" fill="#000"/><rect x="444" y="86" width="1" height="1" fill="#00ffff"/><rect x="445" y="86" width="1" height="1" fill="#000"/><rect x="430" y="87" width="2" height="1" fill="#00ffff"/><rect x="432" y="87" width="1" height="1" fill="#909090"/><rect x="433" y="87" width="4" height="1" fill="#00ffff"/><rect x="437" y="87" width="1" height="1" fill="#000"/><rect x="438" y="87" width="4" height="1" fill="#00ffff"/><rect x="442" y="87" width="1" height="1" fill="#000"/><rect x="443" y="87" width="2" height="1" fill="#00ffff"/><rect x="445" y="87" width="1" height="1" fill="#000"/><rect x="430" y="88" width="1" height="1" fill="#00ffff"/><rect x="431" y="88" width="2" height="1" fill="#000"/><rect x="433" y="88" width="4" height="1" fill="#00ffff"/><rect x="437" y="88" width="2" height="1" fill="#000"/><rect x="439" y="88" width="1" height="1" fill="#00ffff"/><rect x="440" y="88" width="2" height="1" fill="#000"/><rect x="442" y="88" width="1" height="1" fill="#909090"/><rect x="443" y="88" width="2" height="1" fill="#00ffff"/><rect x="445" y="88" width="1" height="1" fill="#000"/><rect x="430" y="89" width="1" height="1" fill="#00ffff"/><rect x="431" y="89" width="1" height="1" fill="#000"/><rect x="432" y="89" width="1" height="1" fill="#909090"/><rect x="433" y="89" width="5" height="1" fill="#000"/><rect x="438" y="89" width="4" height="1" fill="#00ffff"/><rect x="442" y="89" width="1" height="1" fill="#909090"/><rect x="443" y="89" width="2" height="1" fill="#00ffff"/><rect x="445" y="89" width="1" height="1" fill="#000"/><rect x="430" y="90" width="1" height="1" fill="#909090"/><rect x="431" y="90" width="1" height="1" fill="#000"/><rect x="432" y="90" width="5" height="1" fill="#909090"/><rect x="437" y="90" width="1" height="1" fill="#000"/><rect x="438" y="90" width="7" height="1" fill="#909090"/><rect x="445" y="90" width="1" height="1" fill="#000"/><rect x="430" y="91" width="1" height="1" fill="#00ffff"/><rect x="431" y="91" width="1" height="1" fill="#000"/><rect x="432" y="91" width="1" height="1" fill="#909090"/><rect x="433" y="91" width="4" height="1" fill="#00ffff"/><rect x="437" y="91" width="1" height="1" fill="#000"/><rect x="438" y="91" width="4" height="1" fill="#00ffff"/><rect x="442" y="91" width="1" height="1" fill="#909090"/><rect x="443" y="91" width="2" height="1" fill="#00ffff"/><rect x="445" y="91" width="1" height="1" fill="#000"/><rect x="430" y="92" width="1" height="1" fill="#00ffff"/><rect x="431" y="92" width="1" height="1" fill="#000"/><rect x="432" y="92" width="1" height="1" fill="#909090"/><rect x="433" y="92" width="4" height="1" fill="#00ffff"/><rect x="437" y="92" width="1" height="1" fill="#000"/><rect x="438" y="92" width="4" height="1" fill="#00ffff"/><rect x="442" y="92" width="1" height="1" fill="#909090"/><rect x="443" y="92" width="2" height="1" fill="#00ffff"/><rect x="445" y="92" width="1" height="1" fill="#000"/><rect x="430" y="93" width="1" height="1" fill="#00ffff"/><rect x="431" y="93" width="1" height="1" fill="#000"/><rect x="432" y="93" width="1" height="1" fill="#909090"/><rect x="433" y="93" width="9" height="1" fill="#00ff00"/><rect x="442" y="93" width="1" height="1" fill="#909090"/><rect x="443" y="93" width="2" height="1" fill="#00ff00"/><rect x="445" y="93" width="1" height="1" fill="#000"/><rect x="430" y="94" width="16" height="1" fill="#000"/></g></svg>
<span class="tablabel" style="left:45.2px;transform:scaleX(0.9611)">Project View</span>
<span class="tablabel" style="left:154.8px;font-weight:bold;transform:scaleX(0.9113)">Profile View</span>
<span class="tablabel" style="left:276.5px;transform:scaleX(0.9444)">Plan View</span>
<span class="tablabel" style="left:369.5px;transform:scaleX(0.9535)">3D View</span>
<span class="tablabel" style="left:453.5px;transform:scaleX(0.9383)">Sheets View</span>
<svg class="px" width="935" height="935" viewBox="0 0 935 935"><line x1="492.5" y1="104" x2="492.5" y2="353" stroke="#0000ff" stroke-dasharray="3 3"/><line x1="492.5" y1="698" x2="492.5" y2="935" stroke="#0000ff" stroke-dasharray="3 3"/><line x1="823.5" y1="104" x2="823.5" y2="371" stroke="#0000ff" stroke-dasharray="3 3"/><line x1="823.5" y1="716" x2="823.5" y2="935" stroke="#0000ff" stroke-dasharray="3 3"/><polyline points="0.0,541.1 2.0,538.5 3.5,542.0 11.0,546.3 25.0,544.5 30.0,545.6 53.0,545.6 69.0,546.0 78.0,546.8 94.0,548.5 97.0,547.3 108.0,546.4 114.5,545.4 116.5,542.0 118.5,545.4 128.0,548.0 148.0,548.5 151.5,550.2 155.0,550.2 156.0,549.5 158.0,548.5 160.0,548.5 162.0,549.5 166.0,548.5 168.0,548.5 170.0,549.5 173.0,550.5 176.0,549.5 184.0,549.2 185.0,548.5 189.0,548.5 191.0,549.5 195.0,549.5 197.0,550.5 200.0,549.5 204.0,549.5 207.0,548.5 209.0,547.5 216.0,547.5 218.0,548.5 220.0,549.5 252.0,549.5 253.0,548.5 258.0,548.5 259.5,547.3 261.0,549.5 262.0,550.5 264.0,549.5 266.0,549.5 267.0,550.5 269.0,550.5 271.0,549.5 273.0,548.5 275.0,547.5 277.0,546.5 280.0,546.5 282.0,547.5 284.0,548.5 287.0,548.5 289.0,549.5 291.0,550.5 293.0,550.5 295.0,549.5 299.0,549.5 300.0,548.5 302.0,548.8 304.0,549.5 306.0,550.5 311.0,550.5 313.0,551.5 317.0,551.5 319.0,550.5 322.0,549.5 325.0,548.5 326.5,549.5 328.0,550.5 331.0,551.5 334.0,550.5 337.0,551.5 340.0,552.5 343.0,551.5 345.0,550.5 349.0,549.5 351.0,550.5 355.0,551.5 359.0,551.5 361.0,552.5 364.0,551.5 367.0,550.5 370.0,549.5 373.0,550.5 386.0,550.5 388.0,549.5 395.0,549.5 397.0,550.5 400.0,549.5 408.0,549.5 409.5,550.5 412.0,549.5 415.0,548.5 422.0,548.5 424.0,549.5 428.0,549.5 430.0,550.5 433.5,550.5 436.0,549.5 439.0,548.5 440.0,548.5 442.0,549.5 445.0,548.5 447.0,549.5 450.0,549.5 462.0,550.3 466.0,549.4 470.0,549.4 474.0,550.3 479.0,550.3 482.0,549.4 484.0,549.4 492.0,548.0 500.0,546.5 505.0,545.7 507.0,541.4 510.0,535.4 513.0,533.3 515.0,534.9 521.0,535.7 528.0,538.0 537.0,539.3 549.0,540.5 553.0,542.3 556.0,540.9 562.0,539.7 572.0,539.2 580.0,537.3 582.0,539.7 586.0,542.3 590.0,543.5 594.0,544.5 595.0,545.5 598.0,543.5 602.0,543.5 605.0,545.3 609.5,545.3 611.0,542.6 615.4,542.3 619.7,540.5 624.0,540.5 627.4,541.7 631.7,543.1 637.7,546.2 645.4,546.2 651.4,545.2 658.2,544.0 661.6,544.5 664.2,541.4 668.5,539.3 673.3,537.1 676.2,540.2 683.0,540.2 685.6,539.3 692.5,539.3 694.2,540.2 697.6,539.3 700.2,540.2 706.2,540.2 708.7,539.3 711.3,540.2 713.9,544.0 716.1,549.1 717.8,555.1 720.7,555.4 721.9,559.4 726.7,562.5 733.6,562.8 737.0,564.5 742.1,564.5 745.9,562.5 748.1,563.3 752.4,563.3 756.7,565.0 762.7,566.3 767.5,566.3 776.2,564.4 780.0,565.2 785.8,564.4 792.5,563.3 796.4,563.8 801.2,562.3 805.4,561.5 808.9,562.9 815.0,563.5 831.0,563.5 843.6,563.5 847.4,564.4 862.8,564.4 866.7,565.4 874.4,565.4 879.2,566.3 889.8,565.4 895.5,564.4 901.3,565.4 907.1,565.4 910.0,564.4 914.8,565.4 918.7,564.4 924.4,564.4 928.3,565.4 933.1,567.1 935.0,567.7" fill="none" stroke="#000" stroke-width="1" stroke-dasharray="3 3"/><rect x="720" y="572" width="103" height="1" fill="#000"/><polyline points="0.0,657.1 2.0,654.5 3.5,658.0 11.0,662.3 25.0,660.5 30.0,661.6 53.0,661.6 69.0,662.0 78.0,662.8 94.0,664.5 97.0,663.3 108.0,662.4 114.5,661.4 116.5,658.0 118.5,661.4 128.0,664.0 148.0,664.5 151.5,666.2 155.0,666.2 156.0,665.5 158.0,664.5 160.0,664.5 162.0,665.5 166.0,664.5 168.0,664.5 170.0,665.5 173.0,666.5 176.0,665.5 184.0,665.2 185.0,664.5 189.0,664.5 191.0,665.5 195.0,665.5 197.0,666.5 200.0,665.5 204.0,665.5 207.0,664.5 209.0,663.5 216.0,663.5 218.0,664.5 220.0,665.5 252.0,665.5 253.0,664.5 258.0,664.5 259.5,663.3 261.0,665.5 262.0,666.5 264.0,665.5 266.0,665.5 267.0,666.5 269.0,666.5 271.0,665.5 273.0,664.5 275.0,663.5 277.0,662.5 280.0,662.5 282.0,663.5 284.0,664.5 287.0,664.5 289.0,665.5 291.0,666.5 293.0,666.5 295.0,665.5 299.0,665.5 300.0,664.5 302.0,664.8 304.0,665.5 306.0,666.5 311.0,666.5 313.0,667.5 317.0,667.5 319.0,666.5 322.0,665.5 325.0,664.5 326.5,665.5 328.0,666.5 331.0,667.5 334.0,666.5 337.0,667.5 340.0,668.5 343.0,667.5 345.0,666.5 349.0,665.5 351.0,666.5 355.0,667.5 359.0,667.5 361.0,668.5 364.0,667.5 367.0,666.5 370.0,665.5 373.0,666.5 386.0,666.5 388.0,665.5 395.0,665.5 397.0,666.5 400.0,665.5 408.0,665.5 409.5,666.5 412.0,665.5 415.0,664.5 422.0,664.5 424.0,665.5 428.0,665.5 430.0,666.5 433.5,666.5 436.0,665.5 439.0,664.5 440.0,664.5 442.0,665.5 445.0,664.5 447.0,665.5 450.0,665.5 462.0,666.3 466.0,665.4 470.0,665.4 474.0,666.3 479.0,666.3 482.0,665.4 484.0,665.4 492.0,664.0 500.0,662.5 505.0,661.7 507.0,657.4 510.0,651.4 513.0,649.3 515.0,650.9 521.0,651.7 528.0,654.0 537.0,655.3 549.0,656.5 553.0,658.3 556.0,656.9 562.0,655.7 572.0,655.2 580.0,653.3 582.0,655.7 586.0,658.3 590.0,659.5 594.0,660.5 595.0,661.5 598.0,659.5 602.0,659.5 605.0,661.3 609.5,661.3 611.0,658.6 615.4,658.3 619.7,656.5 624.0,656.5 627.4,657.7 631.7,659.1 637.7,662.2 645.4,662.2 651.4,661.2 658.2,660.0 661.6,660.5 664.2,657.4 668.5,655.3 673.3,653.1 676.2,656.2 683.0,656.2 685.6,655.3 692.5,655.3 694.2,656.2 697.6,655.3 700.2,656.2 706.2,656.2 708.7,655.3 711.3,656.2 713.9,660.0 716.1,665.1 717.8,671.1 720.7,671.4 721.9,675.4 726.7,678.5 733.6,678.8 737.0,680.5 742.1,680.5 745.9,678.5 748.1,679.3 752.4,679.3 756.7,681.0 762.7,682.3 767.5,682.3 776.2,680.4 780.0,681.2 785.8,680.4 792.5,679.3 796.4,679.8 801.2,678.3 805.4,677.5 808.9,678.9 815.0,679.5 831.0,679.5 843.6,679.5 847.4,680.4 862.8,680.4 866.7,681.4 874.4,681.4 879.2,682.3 889.8,681.4 895.5,680.4 901.3,681.4 907.1,681.4 910.0,680.4 914.8,681.4 918.7,680.4 924.4,680.4 928.3,681.4 933.1,683.1 935.0,683.7" fill="none" stroke="#0000ff" stroke-width="1" /><rect x="69" y="423" width="32" height="15" fill="#00ff00"/><rect x="500" y="347" width="32" height="15" fill="#00ff00"/><rect x="831" y="364" width="32" height="15" fill="#00ff00"/><polyline points="-0.5,452.0 15.0,447.4 30.0,442.7 45.0,436.8 61.5,430.4" fill="none" stroke="#ff0000" stroke-width="1" /><polyline points="61.5,430.4 66.9,431.5 72.3,432.5 77.7,433.5 83.0,434.4 88.4,435.3 93.8,436.1 99.2,436.8 104.6,437.5 110.0,438.2 115.4,438.8 120.8,439.3 126.2,439.8 131.5,440.3 136.9,440.7 142.3,441.0 147.7,441.3 153.1,441.5 158.5,441.7 163.9,441.8 169.2,441.8 174.6,441.8 180.0,441.8 185.4,441.7 190.8,441.6 196.2,441.4 201.6,441.2 207.0,440.9 212.3,440.5 217.7,440.1 223.1,439.7 228.5,439.2 233.9,438.7 239.3,438.1 244.7,437.4 250.1,436.8 255.4,436.0 260.8,435.2 266.2,434.4 271.6,433.5 277.0,432.6 282.4,431.6 287.8,430.6 293.2,429.5 298.6,428.3 303.9,427.2 309.3,425.9 314.7,424.6 320.1,423.3 325.5,421.9 330.9,420.5 336.3,419.0 341.6,417.5 347.0,415.9 352.4,414.3 357.8,412.6 363.2,410.9 368.6,409.1 374.0,407.2 379.4,405.4 384.8,403.4 390.1,401.5 395.5,399.4 400.9,397.4 406.3,395.2 411.7,393.0 417.1,390.8 422.5,388.5 427.9,386.2 433.2,383.8 438.6,381.4 444.0,378.9 449.4,376.4 454.8,373.8 460.2,371.2 465.6,368.5 470.9,365.8 476.3,363.0 481.7,360.2 487.1,357.3 492.5,354.4" fill="none" stroke="#ff0000" stroke-width="1" /><polyline points="492.5,354.4 498.0,356.6 503.5,358.7 509.1,360.7 514.6,362.7 520.1,364.7 525.6,366.5 531.1,368.3 536.6,370.0 542.1,371.7 547.7,373.3 553.2,374.9 558.7,376.3 564.2,377.7 569.7,379.1 575.2,380.4 580.8,381.6 586.3,382.8 591.8,383.8 597.3,384.9 602.8,385.8 608.4,386.7 613.9,387.6 619.4,388.3 624.9,389.0 630.4,389.7 635.9,390.3 641.5,390.8 647.0,391.2 652.5,391.6 658.0,391.9 663.5,392.2 669.0,392.4 674.5,392.5 680.1,392.6 685.6,392.6 691.1,392.5 696.6,392.4 702.1,392.2 707.6,392.0 713.2,391.6 718.7,391.3 724.2,390.8 729.7,390.3 735.2,389.7 740.8,389.1 746.3,388.4 751.8,387.6 757.3,386.8 762.8,385.9 768.3,384.9 773.9,383.9 779.4,382.8 784.9,381.7 790.4,380.4 795.9,379.2 801.4,377.8 807.0,376.4 812.5,374.9 818.0,373.4 823.5,371.8" fill="none" stroke="#ff0000" stroke-width="1" /><polyline points="823.5,371.8 850.0,385.5 880.0,399.6 910.0,412.6 936.0,423.6" fill="none" stroke="#ff0000" stroke-width="1" /><polyline points="-0.5,452.2 15.0,447.6 30.0,442.9 45.0,437.0 61.5,430.6" fill="none" stroke="#ff0000" stroke-width="1" /><polyline points="61.5,430.6 66.9,431.7 72.3,432.7 77.7,433.7 83.0,434.6 88.4,435.5 93.8,436.3 99.2,437.0 104.6,437.7 110.0,438.4 115.4,439.0 120.8,439.5 126.2,440.0 131.5,440.5 136.9,440.9 142.3,441.2 147.7,441.5 153.1,441.7 158.5,441.9 163.9,442.0 169.2,442.0 174.6,442.0 180.0,442.0 185.4,441.9 190.8,441.8 196.2,441.6 201.6,441.4 207.0,441.1 212.3,440.7 217.7,440.3 223.1,439.9 228.5,439.4 233.9,438.9 239.3,438.3 244.7,437.6 250.1,437.0 255.4,436.2 260.8,435.4 266.2,434.6 271.6,433.7 277.0,432.8 282.4,431.8 287.8,430.8 293.2,429.7 298.6,428.5 303.9,427.4 309.3,426.1 314.7,424.8 320.1,423.5 325.5,422.1 330.9,420.7 336.3,419.2 341.6,417.7 347.0,416.1 352.4,414.5 357.8,412.8 363.2,411.1 368.6,409.3 374.0,407.4 379.4,405.6 384.8,403.6 390.1,401.7 395.5,399.6 400.9,397.6 406.3,395.4 411.7,393.2 417.1,391.0 422.5,388.7 427.9,386.4 433.2,384.0 438.6,381.6 444.0,379.1 449.4,376.6 454.8,374.0 460.2,371.4 465.6,368.7 470.9,366.0 476.3,363.2 481.7,360.4 487.1,357.5 492.5,354.6" fill="none" stroke="#ff0000" stroke-width="1" /><polyline points="492.5,354.6 498.0,356.8 503.5,358.9 509.1,360.9 514.6,362.9 520.1,364.9 525.6,366.7 531.1,368.5 536.6,370.2 542.1,371.9 547.7,373.5 553.2,375.1 558.7,376.5 564.2,377.9 569.7,379.3 575.2,380.6 580.8,381.8 586.3,383.0 591.8,384.0 597.3,385.1 602.8,386.0 608.4,386.9 613.9,387.8 619.4,388.5 624.9,389.2 630.4,389.9 635.9,390.5 641.5,391.0 647.0,391.4 652.5,391.8 658.0,392.1 663.5,392.4 669.0,392.6 674.5,392.7 680.1,392.8 685.6,392.8 691.1,392.7 696.6,392.6 702.1,392.4 707.6,392.2 713.2,391.8 718.7,391.5 724.2,391.0 729.7,390.5 735.2,389.9 740.8,389.3 746.3,388.6 751.8,387.8 757.3,387.0 762.8,386.1 768.3,385.1 773.9,384.1 779.4,383.0 784.9,381.9 790.4,380.6 795.9,379.4 801.4,378.0 807.0,376.6 812.5,375.1 818.0,373.6 823.5,372.0" fill="none" stroke="#ff0000" stroke-width="1" /><polyline points="823.5,372.0 850.0,385.7 880.0,399.8 910.0,412.8 936.0,423.8" fill="none" stroke="#ff0000" stroke-width="1" /><polyline points="-0.5,481.3 15.0,476.7 30.0,472.0 45.0,466.1 61.5,459.7" fill="none" stroke="#ff0000" stroke-width="1" /><polyline points="61.5,459.7 66.9,460.8 72.3,461.8 77.7,462.8 83.0,463.7 88.4,464.6 93.8,465.4 99.2,466.1 104.6,466.8 110.0,467.5 115.4,468.1 120.8,468.6 126.2,469.1 131.5,469.6 136.9,470.0 142.3,470.3 147.7,470.6 153.1,470.8 158.5,471.0 163.9,471.1 169.2,471.1 174.6,471.1 180.0,471.1 185.4,471.0 190.8,470.9 196.2,470.7 201.6,470.5 207.0,470.2 212.3,469.8 217.7,469.4 223.1,469.0 228.5,468.5 233.9,468.0 239.3,467.4 244.7,466.7 250.1,466.1 255.4,465.3 260.8,464.5 266.2,463.7 271.6,462.8 277.0,461.9 282.4,460.9 287.8,459.9 293.2,458.8 298.6,457.6 303.9,456.5 309.3,455.2 314.7,453.9 320.1,452.6 325.5,451.2 330.9,449.8 336.3,448.3 341.6,446.8 347.0,445.2 352.4,443.6 357.8,441.9 363.2,440.2 368.6,438.4 374.0,436.5 379.4,434.7 384.8,432.7 390.1,430.8 395.5,428.7 400.9,426.7 406.3,424.5 411.7,422.3 417.1,420.1 422.5,417.8 427.9,415.5 433.2,413.1 438.6,410.7 444.0,408.2 449.4,405.7 454.8,403.1 460.2,400.5 465.6,397.8 470.9,395.1 476.3,392.3 481.7,389.5 487.1,386.6 492.5,383.7" fill="none" stroke="#ff0000" stroke-width="1" /><polyline points="492.5,383.7 498.0,385.9 503.5,388.0 509.1,390.0 514.6,392.0 520.1,394.0 525.6,395.8 531.1,397.6 536.6,399.3 542.1,401.0 547.7,402.6 553.2,404.2 558.7,405.6 564.2,407.0 569.7,408.4 575.2,409.7 580.8,410.9 586.3,412.1 591.8,413.1 597.3,414.2 602.8,415.1 608.4,416.0 613.9,416.9 619.4,417.6 624.9,418.3 630.4,419.0 635.9,419.6 641.5,420.1 647.0,420.5 652.5,420.9 658.0,421.2 663.5,421.5 669.0,421.7 674.5,421.8 680.1,421.9 685.6,421.9 691.1,421.8 696.6,421.7 702.1,421.5 707.6,421.3 713.2,420.9 718.7,420.6 724.2,420.1 729.7,419.6 735.2,419.0 740.8,418.4 746.3,417.7 751.8,416.9 757.3,416.1 762.8,415.2 768.3,414.2 773.9,413.2 779.4,412.1 784.9,411.0 790.4,409.7 795.9,408.5 801.4,407.1 807.0,405.7 812.5,404.2 818.0,402.7 823.5,401.1" fill="none" stroke="#ff0000" stroke-width="1" /><polyline points="823.5,401.1 850.0,414.8 880.0,428.9 910.0,441.9 936.0,452.9" fill="none" stroke="#ff0000" stroke-width="1" /><polyline points="-0.5,481.5 15.0,476.9 30.0,472.2 45.0,466.3 61.5,459.9" fill="none" stroke="#ff0000" stroke-width="1" /><polyline points="61.5,459.9 66.9,461.0 72.3,462.0 77.7,463.0 83.0,463.9 88.4,464.8 93.8,465.6 99.2,466.3 104.6,467.0 110.0,467.7 115.4,468.3 120.8,468.8 126.2,469.3 131.5,469.8 136.9,470.2 142.3,470.5 147.7,470.8 153.1,471.0 158.5,471.2 163.9,471.3 169.2,471.3 174.6,471.3 180.0,471.3 185.4,471.2 190.8,471.1 196.2,470.9 201.6,470.7 207.0,470.4 212.3,470.0 217.7,469.6 223.1,469.2 228.5,468.7 233.9,468.2 239.3,467.6 244.7,466.9 250.1,466.3 255.4,465.5 260.8,464.7 266.2,463.9 271.6,463.0 277.0,462.1 282.4,461.1 287.8,460.1 293.2,459.0 298.6,457.8 303.9,456.7 309.3,455.4 314.7,454.1 320.1,452.8 325.5,451.4 330.9,450.0 336.3,448.5 341.6,447.0 347.0,445.4 352.4,443.8 357.8,442.1 363.2,440.4 368.6,438.6 374.0,436.7 379.4,434.9 384.8,432.9 390.1,431.0 395.5,428.9 400.9,426.9 406.3,424.7 411.7,422.5 417.1,420.3 422.5,418.0 427.9,415.7 433.2,413.3 438.6,410.9 444.0,408.4 449.4,405.9 454.8,403.3 460.2,400.7 465.6,398.0 470.9,395.3 476.3,392.5 481.7,389.7 487.1,386.8 492.5,383.9" fill="none" stroke="#ff0000" stroke-width="1" /><polyline points="492.5,383.9 498.0,386.1 503.5,388.2 509.1,390.2 514.6,392.2 520.1,394.2 525.6,396.0 531.1,397.8 536.6,399.5 542.1,401.2 547.7,402.8 553.2,404.4 558.7,405.8 564.2,407.2 569.7,408.6 575.2,409.9 580.8,411.1 586.3,412.3 591.8,413.3 597.3,414.4 602.8,415.3 608.4,416.2 613.9,417.1 619.4,417.8 624.9,418.5 630.4,419.2 635.9,419.8 641.5,420.3 647.0,420.7 652.5,421.1 658.0,421.4 663.5,421.7 669.0,421.9 674.5,422.0 680.1,422.1 685.6,422.1 691.1,422.0 696.6,421.9 702.1,421.7 707.6,421.5 713.2,421.1 718.7,420.8 724.2,420.3 729.7,419.8 735.2,419.2 740.8,418.6 746.3,417.9 751.8,417.1 757.3,416.3 762.8,415.4 768.3,414.4 773.9,413.4 779.4,412.3 784.9,411.2 790.4,409.9 795.9,408.7 801.4,407.3 807.0,405.9 812.5,404.4 818.0,402.9 823.5,401.3" fill="none" stroke="#ff0000" stroke-width="1" /><polyline points="823.5,401.3 850.0,415.0 880.0,429.1 910.0,442.1 936.0,453.1" fill="none" stroke="#ff0000" stroke-width="1" /><polyline points="-0.5,510.6 15.0,506.0 30.0,501.3 45.0,495.4 61.5,489.0" fill="none" stroke="#ff0000" stroke-width="1" /><polyline points="61.5,489.0 66.9,490.1 72.3,491.1 77.7,492.1 83.0,493.0 88.4,493.9 93.8,494.7 99.2,495.4 104.6,496.1 110.0,496.8 115.4,497.4 120.8,497.9 126.2,498.4 131.5,498.9 136.9,499.3 142.3,499.6 147.7,499.9 153.1,500.1 158.5,500.3 163.9,500.4 169.2,500.4 174.6,500.4 180.0,500.4 185.4,500.3 190.8,500.2 196.2,500.0 201.6,499.8 207.0,499.5 212.3,499.1 217.7,498.7 223.1,498.3 228.5,497.8 233.9,497.3 239.3,496.7 244.7,496.0 250.1,495.4 255.4,494.6 260.8,493.8 266.2,493.0 271.6,492.1 277.0,491.2 282.4,490.2 287.8,489.2 293.2,488.1 298.6,486.9 303.9,485.8 309.3,484.5 314.7,483.2 320.1,481.9 325.5,480.5 330.9,479.1 336.3,477.6 341.6,476.1 347.0,474.5 352.4,472.9 357.8,471.2 363.2,469.5 368.6,467.7 374.0,465.8 379.4,464.0 384.8,462.0 390.1,460.1 395.5,458.0 400.9,456.0 406.3,453.8 411.7,451.6 417.1,449.4 422.5,447.1 427.9,444.8 433.2,442.4 438.6,440.0 444.0,437.5 449.4,435.0 454.8,432.4 460.2,429.8 465.6,427.1 470.9,424.4 476.3,421.6 481.7,418.8 487.1,415.9 492.5,413.0" fill="none" stroke="#ff0000" stroke-width="1" /><polyline points="492.5,413.0 498.0,415.2 503.5,417.3 509.1,419.3 514.6,421.3 520.1,423.3 525.6,425.1 531.1,426.9 536.6,428.6 542.1,430.3 547.7,431.9 553.2,433.5 558.7,434.9 564.2,436.3 569.7,437.7 575.2,439.0 580.8,440.2 586.3,441.4 591.8,442.4 597.3,443.5 602.8,444.4 608.4,445.3 613.9,446.2 619.4,446.9 624.9,447.6 630.4,448.3 635.9,448.9 641.5,449.4 647.0,449.8 652.5,450.2 658.0,450.5 663.5,450.8 669.0,451.0 674.5,451.1 680.1,451.2 685.6,451.2 691.1,451.1 696.6,451.0 702.1,450.8 707.6,450.6 713.2,450.2 718.7,449.9 724.2,449.4 729.7,448.9 735.2,448.3 740.8,447.7 746.3,447.0 751.8,446.2 757.3,445.4 762.8,444.5 768.3,443.5 773.9,442.5 779.4,441.4 784.9,440.3 790.4,439.0 795.9,437.8 801.4,436.4 807.0,435.0 812.5,433.5 818.0,432.0 823.5,430.4" fill="none" stroke="#ff0000" stroke-width="1" /><polyline points="823.5,430.4 850.0,444.1 880.0,458.2 910.0,471.2 936.0,482.2" fill="none" stroke="#ff0000" stroke-width="1" /><polyline points="-0.5,510.8 15.0,506.2 30.0,501.5 45.0,495.6 61.5,489.2" fill="none" stroke="#ff0000" stroke-width="1" /><polyline points="61.5,489.2 66.9,490.3 72.3,491.3 77.7,492.3 83.0,493.2 88.4,494.1 93.8,494.9 99.2,495.6 104.6,496.3 110.0,497.0 115.4,497.6 120.8,498.1 126.2,498.6 131.5,499.1 136.9,499.5 142.3,499.8 147.7,500.1 153.1,500.3 158.5,500.5 163.9,500.6 169.2,500.6 174.6,500.6 180.0,500.6 185.4,500.5 190.8,500.4 196.2,500.2 201.6,500.0 207.0,499.7 212.3,499.3 217.7,498.9 223.1,498.5 228.5,498.0 233.9,497.5 239.3,496.9 244.7,496.2 250.1,495.6 255.4,494.8 260.8,494.0 266.2,493.2 271.6,492.3 277.0,491.4 282.4,490.4 287.8,489.4 293.2,488.3 298.6,487.1 303.9,486.0 309.3,484.7 314.7,483.4 320.1,482.1 325.5,480.7 330.9,479.3 336.3,477.8 341.6,476.3 347.0,474.7 352.4,473.1 357.8,471.4 363.2,469.7 368.6,467.9 374.0,466.0 379.4,464.2 384.8,462.2 390.1,460.3 395.5,458.2 400.9,456.2 406.3,454.0 411.7,451.8 417.1,449.6 422.5,447.3 427.9,445.0 433.2,442.6 438.6,440.2 444.0,437.7 449.4,435.2 454.8,432.6 460.2,430.0 465.6,427.3 470.9,424.6 476.3,421.8 481.7,419.0 487.1,416.1 492.5,413.2" fill="none" stroke="#ff0000" stroke-width="1" /><polyline points="492.5,413.2 498.0,415.4 503.5,417.5 509.1,419.5 514.6,421.5 520.1,423.5 525.6,425.3 531.1,427.1 536.6,428.8 542.1,430.5 547.7,432.1 553.2,433.7 558.7,435.1 564.2,436.5 569.7,437.9 575.2,439.2 580.8,440.4 586.3,441.6 591.8,442.6 597.3,443.7 602.8,444.6 608.4,445.5 613.9,446.4 619.4,447.1 624.9,447.8 630.4,448.5 635.9,449.1 641.5,449.6 647.0,450.0 652.5,450.4 658.0,450.7 663.5,451.0 669.0,451.2 674.5,451.3 680.1,451.4 685.6,451.4 691.1,451.3 696.6,451.2 702.1,451.0 707.6,450.8 713.2,450.4 718.7,450.1 724.2,449.6 729.7,449.1 735.2,448.5 740.8,447.9 746.3,447.2 751.8,446.4 757.3,445.6 762.8,444.7 768.3,443.7 773.9,442.7 779.4,441.6 784.9,440.5 790.4,439.2 795.9,438.0 801.4,436.6 807.0,435.2 812.5,433.7 818.0,432.2 823.5,430.6" fill="none" stroke="#ff0000" stroke-width="1" /><polyline points="823.5,430.6 850.0,444.3 880.0,458.4 910.0,471.4 936.0,482.4" fill="none" stroke="#ff0000" stroke-width="1" /><rect x="61" y="430" width="1" height="227" fill="#ff0000"/><rect x="492" y="354" width="1" height="304" fill="#ff0000"/><rect x="823" y="372" width="1" height="302" fill="#ff0000"/><rect x="53" y="656" width="16" height="14" fill="#00ff00"/><rect x="484" y="657" width="16" height="14" fill="#00ff00"/><rect x="815" y="673" width="16" height="14" fill="#00ff00"/></svg>
<span class="vt" style="left:269.9px;top:352.9px;font-size:14px;letter-spacing:1.5px;">111.27</span>
<span class="vt" style="left:650.1px;top:353.8px;font-size:14px;letter-spacing:1.1px;">85.73</span>
<span class="vt" style="left:55.3px;top:411.3px;">7</span>
<span class="vt" style="left:485.3px;top:335.3px;">8</span>
<span class="vt" style="left:817.3px;top:352.4px;">9</span>
<span class="vt" style="left:478.8px;top:659.3px;font-size:13.5px;">PI -4.21&deg;</span>
<span class="vt" style="left:810.8px;top:675.3px;font-size:13.8px;">PI -8.39&deg;</span>
<svg class="px" width="935" height="935" viewBox="0 0 935 935"><rect x="492" y="560" width="1" height="98" fill="#ff0000"/><rect x="823" y="600" width="1" height="74" fill="#ff0000"/><rect x="484" y="657" width="16" height="14" fill="#00ff00"/><rect x="815" y="673" width="16" height="14" fill="#00ff00"/></svg>
<span class="gl" style="left:71.8px;top:423px;font-size:16.5px;transform-origin:0 50%;transform:scaleX(0.8921)">G G</span>
<span class="gl" style="left:502.8px;top:347px;font-size:16.5px;transform-origin:0 50%;transform:scaleX(0.8921)">G G</span>
<span class="gl" style="left:833.8px;top:364px;font-size:16.5px;transform-origin:0 50%;transform:scaleX(0.8921)">G G</span>
<span class="gl" style="left:55.8px;top:655.5px;font-size:16.5px;transform-origin:0 50%;transform:scaleX(0.8642)">G</span>
<span class="gl" style="left:486.8px;top:656.5px;font-size:16.5px;transform-origin:0 50%;transform:scaleX(0.8642)">G</span>
<span class="gl" style="left:817.8px;top:672.5px;font-size:16.5px;transform-origin:0 50%;transform:scaleX(0.8642)">G</span>
<span class="pct" style="left:38.4px;top:671px;transform-origin:0 50%;transform:scaleX(0.9386)">35%</span>
<span class="pct" style="left:70.8px;top:671px;transform-origin:0 50%;transform:scaleX(0.8503)">0%</span>
<span class="pct" style="left:41.5px;top:684.6px;transform-origin:0 50%;transform:scaleX(0.8513)">OK</span>
<span class="pct" style="left:66.6px;top:684.6px;transform-origin:0 50%;transform:scaleX(0.8503)">0%</span>
<span class="pct" style="left:469.4px;top:672px;transform-origin:0 50%;transform:scaleX(0.9386)">50%</span>
<span class="pct" style="left:501.8px;top:672px;transform-origin:0 50%;transform:scaleX(0.8503)">0%</span>
<span class="pct" style="left:472.5px;top:685.6px;transform-origin:0 50%;transform:scaleX(0.8513)">OK</span>
<span class="pct" style="left:497.6px;top:685.6px;transform-origin:0 50%;transform:scaleX(0.8503)">0%</span>
<span class="pct" style="left:800.4px;top:688px;transform-origin:0 50%;transform:scaleX(0.9386)">42%</span>
<span class="pct" style="left:832.8px;top:688px;transform-origin:0 50%;transform:scaleX(0.8503)">0%</span>
<span class="pct" style="left:803.5px;top:701.6px;transform-origin:0 50%;transform:scaleX(0.8513)">OK</span>
<span class="pct" style="left:828.6px;top:701.6px;transform-origin:0 50%;transform:scaleX(0.8503)">0%</span>
</body></html>
